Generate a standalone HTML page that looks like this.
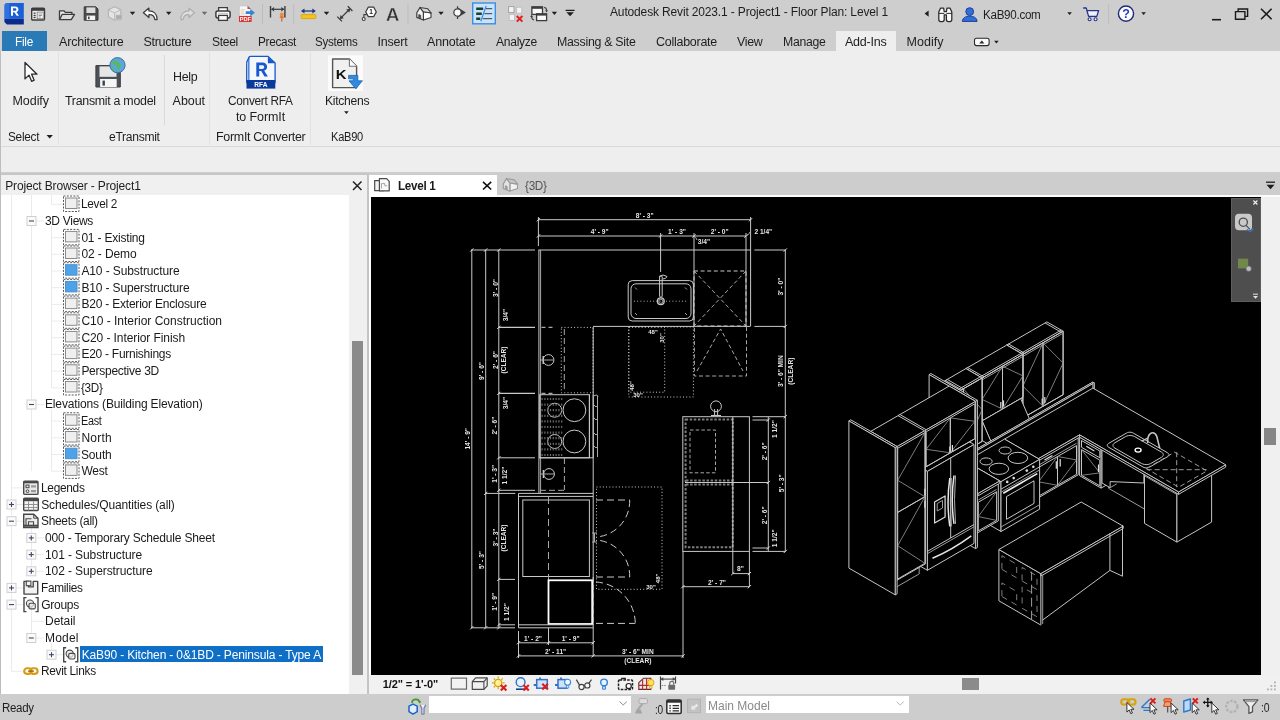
<!DOCTYPE html>
<html><head><meta charset="utf-8"><title>Autodesk Revit 2023.1 - Project1 - Floor Plan: Level 1</title>
<style>
*{box-sizing:border-box;margin:0;padding:0}
html,body{width:1280px;height:720px;overflow:hidden;background:#cecece;font-family:"Liberation Sans",sans-serif}
.a{position:absolute}
.t{position:absolute;white-space:nowrap;font-family:"Liberation Sans",sans-serif}
#titlebar{left:0;top:0;width:1280px;height:31px;background:#cecece}
#tabrow{left:0;top:31px;width:1280px;height:20px;background:#cecece}
#filetab{left:2px;top:31px;width:45px;height:20px;background:#2b7ab8}
#addins{left:836px;top:31px;width:60px;height:21px;background:#eeeeee}
#ribbon{left:1px;top:51px;width:1279px;height:96px;background:#eeeeee;border-bottom:1px solid #dadada}
#optbar{left:1px;top:147px;width:1279px;height:25px;background:#eeeeee}
#band{left:0;top:172.5px;width:1280px;height:2.5px;background:#c6c6c6}
.psep{position:absolute;top:52px;width:1px;height:93px;background:#e2e2e2}
#pbhead{left:1px;top:175px;width:366px;height:20px;background:#f0f0f0}
#pbtree{left:1px;top:195px;width:348px;height:499.3px;background:#ffffff}
#pbscroll{left:349px;top:195px;width:18px;height:499.3px;background:#f0f0f0}
#pbthumb{left:352px;top:341px;width:11px;height:334px;background:#8b8b8b}
#pbgap{left:365px;top:175px;width:6px;height:519px;background:linear-gradient(90deg,#f0f0f0 0,#f0f0f0 2px,#c4c4c4 2px,#c4c4c4 3.8px,#fff 3.8px)}
#sel{left:80px;top:645.6px;width:242.5px;height:16.3px;background:#0f6fc6}
#viewtabs{left:369px;top:173px;width:911px;height:24px;background:#cdcdcd;border-bottom:2.5px solid #fbfbfb}
#tab1{left:369px;top:175px;width:128px;height:22px;background:#ffffff}
#view{left:371px;top:197px;width:890.3px;height:478px;background:#000}
#vscroll{left:1261.3px;top:197px;width:18.7px;height:478px;background:#f0f0f0}
#vthumb{left:1264px;top:428px;width:12px;height:16.7px;background:#868686}
#vcb{left:369px;top:675px;width:911px;height:19.3px;background:#f1f1f1}
#hthumb{left:962px;top:678px;width:17px;height:12px;background:#8b8b8b}
#status{left:0;top:694.3px;width:1280px;height:25.7px;background:#cdcdcd}
#combo1{left:429px;top:696px;width:202px;height:17px;background:#fff}
#combo2{left:706px;top:696px;width:203px;height:17px;background:#fff}
#navbar{left:1231px;top:197.5px;width:30px;height:104.5px;background:#4e4e4e;border:1px solid #5e5e5e}
#leftedge{left:0;top:51px;width:1px;height:643px;background:#bdbdbd}
svg{position:absolute;left:0;top:0;overflow:visible;will-change:transform}
</style></head><body>
<div class="a" id="titlebar"></div>
<div class="a" id="tabrow"></div>
<div class="a" id="filetab"></div>
<div class="a" id="addins"></div>
<div class="a" id="ribbon"></div>
<div class="a" id="optbar"></div>
<div class="a" id="band"></div>
<div class="psep" style="left:58px"></div>
<div class="psep" style="left:209px"></div>
<div class="psep" style="left:310px"></div>
<div class="psep" style="left:164px;top:55px;height:70px;background:#d9d9d9"></div>
<div class="a" id="pbhead"></div>
<div class="a" id="pbtree"></div>
<div class="a" id="pbscroll"></div>
<div class="a" id="pbthumb"></div>
<div class="a" id="pbgap"></div>
<div class="a" id="sel"></div>
<div class="a" id="viewtabs"></div>
<div class="a" id="tab1"></div>
<div class="a" id="view"></div>
<div class="a" id="vscroll"></div>
<div class="a" id="vthumb"></div>
<div class="a" id="vcb"></div>
<div class="a" id="hthumb"></div>
<div class="a" id="status"></div>
<div class="a" id="combo1"></div>
<div class="a" id="combo2"></div>
<div class="a" id="navbar"></div>
<div class="a" id="leftedge"></div>
<svg width="1280" height="720" viewBox="0 0 1280 720" font-family="Liberation Sans, sans-serif">
<line x1="538.4" y1="219.7" x2="750.6" y2="219.7" stroke="#c9c9c9" stroke-width="1"/>
<line x1="538.4" y1="236.0" x2="746.0" y2="236.0" stroke="#c9c9c9" stroke-width="1"/>
<line x1="538.4" y1="217.0" x2="538.4" y2="246.0" stroke="#c9c9c9" stroke-width="1"/>
<line x1="750.6" y1="217.0" x2="750.6" y2="326.0" stroke="#c9c9c9" stroke-width="1"/>
<line x1="660.6" y1="233.0" x2="660.6" y2="272.0" stroke="#c9c9c9" stroke-width="1"/>
<line x1="694.0" y1="233.0" x2="694.0" y2="271.0" stroke="#c9c9c9" stroke-width="1"/>
<line x1="746.0" y1="233.0" x2="746.0" y2="271.0" stroke="#c9c9c9" stroke-width="1"/>
<line x1="536.8" y1="221.3" x2="540.0" y2="218.1" stroke="#dddddd" stroke-width="1"/>
<line x1="749.0" y1="221.3" x2="752.2" y2="218.1" stroke="#dddddd" stroke-width="1"/>
<line x1="536.8" y1="237.6" x2="540.0" y2="234.4" stroke="#dddddd" stroke-width="1"/>
<line x1="659.0" y1="237.6" x2="662.2" y2="234.4" stroke="#dddddd" stroke-width="1"/>
<line x1="692.4" y1="237.6" x2="695.6" y2="234.4" stroke="#dddddd" stroke-width="1"/>
<line x1="744.4" y1="237.6" x2="747.6" y2="234.4" stroke="#dddddd" stroke-width="1"/>
<text x="644.7" y="215.4" font-size="6.6" font-weight="bold" fill="#e6e6e6" text-anchor="middle" dominant-baseline="central">8' - 3"</text>
<text x="599.7" y="231.9" font-size="6.6" font-weight="bold" fill="#e6e6e6" text-anchor="middle" dominant-baseline="central">4' - 9"</text>
<text x="677.0" y="231.9" font-size="6.6" font-weight="bold" fill="#e6e6e6" text-anchor="middle" dominant-baseline="central">1' - 3"</text>
<text x="719.7" y="231.9" font-size="6.6" font-weight="bold" fill="#e6e6e6" text-anchor="middle" dominant-baseline="central">2' - 0"</text>
<text x="763.3" y="231.9" font-size="6.6" font-weight="bold" fill="#e6e6e6" text-anchor="middle" dominant-baseline="central">2 1/4"</text>
<text x="704.0" y="241.0" font-size="6.6" font-weight="bold" fill="#e6e6e6" text-anchor="middle" dominant-baseline="central">3/4"</text>
<path d="M746 236 q3 -1 4 -4" fill="none" stroke="#a8a8a8" stroke-width="1"/>
<path d="M694 236 q2 1 3 4" fill="none" stroke="#a8a8a8" stroke-width="1"/>
<line x1="471.0" y1="250.0" x2="535.0" y2="250.0" stroke="#c9c9c9" stroke-width="1"/>
<line x1="471.8" y1="250.0" x2="471.8" y2="627.8" stroke="#c9c9c9" stroke-width="1"/>
<line x1="485.7" y1="250.0" x2="485.7" y2="627.8" stroke="#c9c9c9" stroke-width="1"/>
<line x1="498.8" y1="250.0" x2="498.8" y2="627.8" stroke="#c9c9c9" stroke-width="1"/>
<line x1="470.2" y1="251.6" x2="473.4" y2="248.4" stroke="#dddddd" stroke-width="1"/>
<line x1="484.1" y1="251.6" x2="487.3" y2="248.4" stroke="#dddddd" stroke-width="1"/>
<line x1="497.2" y1="251.6" x2="500.4" y2="248.4" stroke="#dddddd" stroke-width="1"/>
<line x1="470.2" y1="629.4" x2="473.4" y2="626.1" stroke="#dddddd" stroke-width="1"/>
<line x1="484.1" y1="629.4" x2="487.3" y2="626.1" stroke="#dddddd" stroke-width="1"/>
<line x1="497.2" y1="629.4" x2="500.4" y2="626.1" stroke="#dddddd" stroke-width="1"/>
<line x1="484.1" y1="495.0" x2="487.3" y2="491.8" stroke="#dddddd" stroke-width="1"/>
<line x1="497.2" y1="329.0" x2="500.4" y2="325.8" stroke="#dddddd" stroke-width="1"/>
<line x1="497.2" y1="395.0" x2="500.4" y2="391.8" stroke="#dddddd" stroke-width="1"/>
<line x1="497.2" y1="459.4" x2="500.4" y2="456.2" stroke="#dddddd" stroke-width="1"/>
<line x1="497.2" y1="491.9" x2="500.4" y2="488.7" stroke="#dddddd" stroke-width="1"/>
<line x1="497.2" y1="581.0" x2="500.4" y2="577.8" stroke="#dddddd" stroke-width="1"/>
<line x1="497.2" y1="626.4" x2="500.4" y2="623.1" stroke="#dddddd" stroke-width="1"/>
<line x1="498.8" y1="327.4" x2="535.0" y2="327.4" stroke="#c9c9c9" stroke-width="1.4"/>
<line x1="498.8" y1="393.4" x2="535.0" y2="393.4" stroke="#c9c9c9" stroke-width="1.4"/>
<line x1="498.8" y1="457.8" x2="535.0" y2="457.8" stroke="#c9c9c9" stroke-width="1"/>
<line x1="498.8" y1="490.3" x2="535.0" y2="490.3" stroke="#c9c9c9" stroke-width="1"/>
<line x1="485.3" y1="493.4" x2="515.3" y2="493.4" stroke="#c9c9c9" stroke-width="1"/>
<line x1="498.8" y1="579.4" x2="515.0" y2="579.4" stroke="#c9c9c9" stroke-width="1"/>
<line x1="498.8" y1="624.8" x2="515.0" y2="624.8" stroke="#c9c9c9" stroke-width="1"/>
<line x1="471.0" y1="627.8" x2="515.0" y2="627.8" stroke="#c9c9c9" stroke-width="1"/>
<text x="495.0" y="288.0" font-size="6.6" font-weight="bold" fill="#e6e6e6" text-anchor="middle" dominant-baseline="central" transform="rotate(-90 495.0 288.0)">3' - 0"</text>
<text x="505.0" y="315.0" font-size="6.6" font-weight="bold" fill="#e6e6e6" text-anchor="middle" dominant-baseline="central" transform="rotate(-90 505.0 315.0)">3/4"</text>
<text x="481.5" y="371.0" font-size="6.6" font-weight="bold" fill="#e6e6e6" text-anchor="middle" dominant-baseline="central" transform="rotate(-90 481.5 371.0)">9' - 6"</text>
<text x="495.0" y="360.0" font-size="6.6" font-weight="bold" fill="#e6e6e6" text-anchor="middle" dominant-baseline="central" transform="rotate(-90 495.0 360.0)">2' - 6"</text>
<text x="503.8" y="360.0" font-size="6.6" font-weight="bold" fill="#e6e6e6" text-anchor="middle" dominant-baseline="central" transform="rotate(-90 503.8 360.0)">(CLEAR)</text>
<text x="505.0" y="403.0" font-size="6.6" font-weight="bold" fill="#e6e6e6" text-anchor="middle" dominant-baseline="central" transform="rotate(-90 505.0 403.0)">3/4"</text>
<text x="495.0" y="425.6" font-size="6.6" font-weight="bold" fill="#e6e6e6" text-anchor="middle" dominant-baseline="central" transform="rotate(-90 495.0 425.6)">2' - 6"</text>
<text x="467.5" y="438.8" font-size="6.6" font-weight="bold" fill="#e6e6e6" text-anchor="middle" dominant-baseline="central" transform="rotate(-90 467.5 438.8)">14' - 9"</text>
<text x="495.0" y="473.8" font-size="6.6" font-weight="bold" fill="#e6e6e6" text-anchor="middle" dominant-baseline="central" transform="rotate(-90 495.0 473.8)">1' - 3"</text>
<text x="505.0" y="475.6" font-size="6.6" font-weight="bold" fill="#e6e6e6" text-anchor="middle" dominant-baseline="central" transform="rotate(-90 505.0 475.6)">1 1/2"</text>
<text x="495.0" y="537.5" font-size="6.6" font-weight="bold" fill="#e6e6e6" text-anchor="middle" dominant-baseline="central" transform="rotate(-90 495.0 537.5)">3' - 3"</text>
<text x="503.8" y="538.0" font-size="6.6" font-weight="bold" fill="#e6e6e6" text-anchor="middle" dominant-baseline="central" transform="rotate(-90 503.8 538.0)">(CLEAR)</text>
<text x="481.5" y="560.0" font-size="6.6" font-weight="bold" fill="#e6e6e6" text-anchor="middle" dominant-baseline="central" transform="rotate(-90 481.5 560.0)">5' - 3"</text>
<text x="495.0" y="601.9" font-size="6.6" font-weight="bold" fill="#e6e6e6" text-anchor="middle" dominant-baseline="central" transform="rotate(-90 495.0 601.9)">1' - 9"</text>
<text x="506.5" y="612.0" font-size="6.6" font-weight="bold" fill="#e6e6e6" text-anchor="middle" dominant-baseline="central" transform="rotate(-90 506.5 612.0)">1 1/2"</text>
<line x1="538.4" y1="250.0" x2="750.6" y2="250.0" stroke="#c9c9c9" stroke-width="1"/>
<line x1="538.9" y1="250.0" x2="538.9" y2="493.4" stroke="#c9c9c9" stroke-width="1"/>
<line x1="540.6" y1="250.0" x2="540.6" y2="493.4" stroke="#a8a8a8" stroke-width="1"/>
<line x1="593.0" y1="326.4" x2="750.6" y2="326.4" stroke="#c9c9c9" stroke-width="1"/>
<line x1="541.5" y1="327.4" x2="555.0" y2="327.4" stroke="#a8a8a8" stroke-width="1.4" stroke-dasharray="4 3"/>
<line x1="541.5" y1="393.4" x2="555.0" y2="393.4" stroke="#a8a8a8" stroke-width="1.4" stroke-dasharray="4 3"/>
<rect x="628.2" y="280.6" width="65.2" height="40.4" fill="none" stroke="#c9c9c9" stroke-width="1" rx="4"/>
<rect x="631.0" y="283.8" width="60.0" height="34.7" fill="none" stroke="#c9c9c9" stroke-width="1" rx="5"/>
<line x1="634.0" y1="301.2" x2="688.0" y2="301.2" stroke="#a8a8a8" stroke-width="1" stroke-dasharray="1 2.2"/>
<line x1="635.0" y1="287.5" x2="637.0" y2="289.5" stroke="#a8a8a8" stroke-width="1"/>
<line x1="685.0" y1="287.5" x2="687.0" y2="289.5" stroke="#a8a8a8" stroke-width="1"/>
<line x1="635.0" y1="313.0" x2="637.0" y2="315.0" stroke="#a8a8a8" stroke-width="1"/>
<line x1="685.0" y1="313.0" x2="687.0" y2="315.0" stroke="#a8a8a8" stroke-width="1"/>
<circle cx="660.8" cy="301.3" r="3.4" fill="none" stroke="#c9c9c9" stroke-width="1.3"/>
<circle cx="660.8" cy="301.3" r="2.1" fill="none" stroke="#a8a8a8" stroke-width="1"/>
<rect x="659.6" y="276.0" width="2.6" height="21.0" fill="none" stroke="#c9c9c9" stroke-width="1" rx="1"/>
<path d="M659 276.5 q4 -3 8 0 q-1 2.5 -4 2.5" fill="none" stroke="#c9c9c9" stroke-width="1"/>
<rect x="694.0" y="271.0" width="52.0" height="55.0" fill="none" stroke="#c9c9c9" stroke-width="1" stroke-dasharray="4 2.6"/>
<line x1="694.0" y1="271.0" x2="746.0" y2="326.0" stroke="#a8a8a8" stroke-width="1" stroke-dasharray="4 2.6"/>
<line x1="746.0" y1="271.0" x2="694.0" y2="326.0" stroke="#a8a8a8" stroke-width="1" stroke-dasharray="4 2.6"/>
<line x1="694.0" y1="271.0" x2="694.0" y2="326.0" stroke="#c9c9c9" stroke-width="1"/>
<line x1="746.0" y1="271.0" x2="746.0" y2="326.0" stroke="#c9c9c9" stroke-width="1"/>
<line x1="754.4" y1="250.0" x2="785.3" y2="250.0" stroke="#c9c9c9" stroke-width="1"/>
<line x1="754.4" y1="326.4" x2="785.3" y2="326.4" stroke="#c9c9c9" stroke-width="1"/>
<line x1="785.3" y1="250.0" x2="785.3" y2="416.6" stroke="#c9c9c9" stroke-width="1"/>
<line x1="783.7" y1="251.6" x2="786.9" y2="248.4" stroke="#dddddd" stroke-width="1"/>
<line x1="783.7" y1="328.0" x2="786.9" y2="324.8" stroke="#dddddd" stroke-width="1"/>
<line x1="783.7" y1="418.2" x2="786.9" y2="415.0" stroke="#dddddd" stroke-width="1"/>
<text x="780.6" y="286.6" font-size="6.6" font-weight="bold" fill="#e6e6e6" text-anchor="middle" dominant-baseline="central" transform="rotate(-90 780.6 286.6)">3' - 0"</text>
<text x="780.6" y="371.2" font-size="6.6" font-weight="bold" fill="#e6e6e6" text-anchor="middle" dominant-baseline="central" transform="rotate(-90 780.6 371.2)">3' - 6" MIN</text>
<text x="790.6" y="371.2" font-size="6.6" font-weight="bold" fill="#e6e6e6" text-anchor="middle" dominant-baseline="central" transform="rotate(-90 790.6 371.2)">(CLEAR)</text>
<rect x="561.3" y="327.4" width="31.7" height="65.4" fill="none" stroke="#c9c9c9" stroke-width="1" stroke-dasharray="1 2.2"/>
<line x1="564.3" y1="329.0" x2="564.3" y2="392.0" stroke="#a8a8a8" stroke-width="1" stroke-dasharray="6 3"/>
<rect x="628.8" y="327.0" width="35.9" height="65.2" fill="none" stroke="#c9c9c9" stroke-width="1" stroke-dasharray="1 2.2"/>
<rect x="628.8" y="327.0" width="64.6" height="70.0" fill="none" stroke="#c9c9c9" stroke-width="1" stroke-dasharray="1 2.2"/>
<text x="653.0" y="331.5" font-size="6" font-weight="bold" fill="#e6e6e6" text-anchor="middle" dominant-baseline="central">48"</text>
<text x="661.5" y="338.0" font-size="6" font-weight="bold" fill="#e6e6e6" text-anchor="middle" dominant-baseline="central" transform="rotate(-90 661.5 338.0)">30"</text>
<text x="631.5" y="386.0" font-size="6" font-weight="bold" fill="#e6e6e6" text-anchor="middle" dominant-baseline="central" transform="rotate(-90 631.5 386.0)">48"</text>
<text x="638.0" y="394.7" font-size="6" font-weight="bold" fill="#e6e6e6" text-anchor="middle" dominant-baseline="central">30"</text>
<rect x="694.4" y="326.4" width="52.1" height="49.6" fill="none" stroke="#a8a8a8" stroke-width="1" stroke-dasharray="4 2.6"/>
<path d="M697 371 L720.6 329 L743 371" fill="none" stroke="#a8a8a8" stroke-width="1" stroke-dasharray="4 2.6"/>
<line x1="593.2" y1="327.0" x2="593.2" y2="656.2" stroke="#c9c9c9" stroke-width="1"/>
<circle cx="548.5" cy="360.0" r="5.4" fill="none" stroke="#c9c9c9" stroke-width="1"/>
<line x1="543.2" y1="356.0" x2="543.2" y2="364.0" stroke="#c9c9c9" stroke-width="1.4"/>
<line x1="540.0" y1="360.0" x2="553.0" y2="360.0" stroke="#a8a8a8" stroke-width="1"/>
<rect x="539.7" y="394.7" width="49.7" height="63.1" fill="none" stroke="#c9c9c9" stroke-width="1"/>
<line x1="593.2" y1="394.7" x2="593.2" y2="457.8" stroke="#c9c9c9" stroke-width="1"/>
<line x1="589.4" y1="394.7" x2="589.4" y2="457.8" stroke="#c9c9c9" stroke-width="1"/>
<circle cx="554.7" cy="410.2" r="7.0" fill="none" stroke="#c9c9c9" stroke-width="1"/>
<circle cx="574.4" cy="410.2" r="11.4" fill="none" stroke="#c9c9c9" stroke-width="1"/>
<circle cx="554.7" cy="441.5" r="7.0" fill="none" stroke="#c9c9c9" stroke-width="1"/>
<circle cx="574.4" cy="441.5" r="11.4" fill="none" stroke="#c9c9c9" stroke-width="1"/>
<line x1="541.5" y1="399.0" x2="563.0" y2="399.0" stroke="#6c6c6c" stroke-width="2.2" stroke-dasharray="1.2 1.6"/>
<line x1="541.5" y1="404.6" x2="563.0" y2="404.6" stroke="#6c6c6c" stroke-width="2.2" stroke-dasharray="1.2 1.6"/>
<line x1="541.5" y1="410.2" x2="563.0" y2="410.2" stroke="#6c6c6c" stroke-width="2.2" stroke-dasharray="1.2 1.6"/>
<line x1="541.5" y1="415.8" x2="563.0" y2="415.8" stroke="#6c6c6c" stroke-width="2.2" stroke-dasharray="1.2 1.6"/>
<line x1="541.5" y1="421.4" x2="563.0" y2="421.4" stroke="#6c6c6c" stroke-width="2.2" stroke-dasharray="1.2 1.6"/>
<line x1="541.5" y1="427.0" x2="563.0" y2="427.0" stroke="#6c6c6c" stroke-width="2.2" stroke-dasharray="1.2 1.6"/>
<line x1="541.5" y1="432.6" x2="563.0" y2="432.6" stroke="#6c6c6c" stroke-width="2.2" stroke-dasharray="1.2 1.6"/>
<line x1="541.5" y1="438.2" x2="563.0" y2="438.2" stroke="#6c6c6c" stroke-width="2.2" stroke-dasharray="1.2 1.6"/>
<line x1="541.5" y1="443.8" x2="563.0" y2="443.8" stroke="#6c6c6c" stroke-width="2.2" stroke-dasharray="1.2 1.6"/>
<line x1="541.5" y1="449.4" x2="563.0" y2="449.4" stroke="#6c6c6c" stroke-width="2.2" stroke-dasharray="1.2 1.6"/>
<line x1="541.5" y1="455.0" x2="563.0" y2="455.0" stroke="#6c6c6c" stroke-width="2.2" stroke-dasharray="1.2 1.6"/>
<path d="M594 405.0 l2 2 l2 -2" fill="none" stroke="#a8a8a8" stroke-width="1"/>
<path d="M594 418.0 l2 2 l2 -2" fill="none" stroke="#a8a8a8" stroke-width="1"/>
<path d="M594 433.0 l2 2 l2 -2" fill="none" stroke="#a8a8a8" stroke-width="1"/>
<path d="M594 446.0 l2 2 l2 -2" fill="none" stroke="#a8a8a8" stroke-width="1"/>
<line x1="597.5" y1="396.0" x2="597.5" y2="457.0" stroke="#a8a8a8" stroke-width="1"/>
<path d="M593 396 l4 -1 l1 2" fill="none" stroke="#a8a8a8" stroke-width="1"/>
<line x1="539.0" y1="457.8" x2="593.2" y2="457.8" stroke="#c9c9c9" stroke-width="1"/>
<line x1="518.5" y1="493.4" x2="593.2" y2="493.4" stroke="#c9c9c9" stroke-width="1"/>
<line x1="518.5" y1="496.4" x2="593.2" y2="496.4" stroke="#c9c9c9" stroke-width="1"/>
<circle cx="549.0" cy="474.0" r="5.4" fill="none" stroke="#c9c9c9" stroke-width="1"/>
<line x1="543.4" y1="470.0" x2="543.4" y2="478.0" stroke="#c9c9c9" stroke-width="1.4"/>
<line x1="540.0" y1="474.0" x2="554.0" y2="474.0" stroke="#a8a8a8" stroke-width="1"/>
<line x1="564.4" y1="458.0" x2="564.4" y2="490.0" stroke="#a8a8a8" stroke-width="1" stroke-dasharray="6 3"/>
<line x1="540.0" y1="490.3" x2="564.0" y2="490.3" stroke="#a8a8a8" stroke-width="1" stroke-dasharray="6 3"/>
<line x1="518.5" y1="493.4" x2="518.5" y2="627.8" stroke="#c9c9c9" stroke-width="1"/>
<rect x="522.8" y="500.0" width="66.6" height="76.5" fill="none" stroke="#c9c9c9" stroke-width="1"/>
<line x1="548.5" y1="497.0" x2="548.5" y2="580.0" stroke="#a8a8a8" stroke-width="1" stroke-dasharray="7 4"/>
<rect x="548.5" y="580.3" width="43.7" height="43.7" fill="none" stroke="#ffffff" stroke-width="1.8"/>
<line x1="518.5" y1="624.8" x2="593.5" y2="624.8" stroke="#c9c9c9" stroke-width="1"/>
<line x1="518.5" y1="627.8" x2="593.5" y2="627.8" stroke="#c9c9c9" stroke-width="1"/>
<line x1="596.0" y1="500.0" x2="629.7" y2="500.0" stroke="#c9c9c9" stroke-width="1" stroke-dasharray="7 4"/>
<path d="M629.7 500 A36 36 0 0 1 596 537" fill="none" stroke="#c9c9c9" stroke-width="1" stroke-dasharray="7 4"/>
<line x1="596.0" y1="577.0" x2="629.7" y2="577.0" stroke="#c9c9c9" stroke-width="1" stroke-dasharray="7 4"/>
<path d="M629.7 577 A36 36 0 0 0 596 540" fill="none" stroke="#c9c9c9" stroke-width="1" stroke-dasharray="7 4"/>
<path d="M596 582 A42 42 0 0 1 635.3 623.4" fill="none" stroke="#c9c9c9" stroke-width="1" stroke-dasharray="7 4"/>
<line x1="596.0" y1="623.4" x2="635.3" y2="623.4" stroke="#c9c9c9" stroke-width="1" stroke-dasharray="7 4"/>
<line x1="593.2" y1="577.0" x2="593.2" y2="624.0" stroke="#c9c9c9" stroke-width="1" stroke-dasharray="5 3"/>
<path d="M592 533 h5 M594.5 533 v9 M592 542 h5" fill="none" stroke="#a8a8a8" stroke-width="1"/>
<rect x="596.5" y="487.0" width="65.5" height="102.3" fill="none" stroke="#c9c9c9" stroke-width="1" stroke-dasharray="1 2.2"/>
<text x="657.8" y="578.4" font-size="6" font-weight="bold" fill="#e6e6e6" text-anchor="middle" dominant-baseline="central" transform="rotate(-90 657.8 578.4)">48"</text>
<text x="651.0" y="586.9" font-size="6" font-weight="bold" fill="#e6e6e6" text-anchor="middle" dominant-baseline="central">30"</text>
<line x1="518.5" y1="642.8" x2="593.5" y2="642.8" stroke="#c9c9c9" stroke-width="1"/>
<line x1="518.5" y1="655.9" x2="683.0" y2="655.9" stroke="#c9c9c9" stroke-width="1"/>
<line x1="518.5" y1="631.0" x2="518.5" y2="658.0" stroke="#c9c9c9" stroke-width="1"/>
<line x1="548.5" y1="627.8" x2="548.5" y2="645.0" stroke="#c9c9c9" stroke-width="1"/>
<line x1="683.0" y1="551.4" x2="683.0" y2="658.0" stroke="#c9c9c9" stroke-width="1"/>
<line x1="516.9" y1="644.4" x2="520.1" y2="641.1" stroke="#dddddd" stroke-width="1"/>
<line x1="546.9" y1="644.4" x2="550.1" y2="641.1" stroke="#dddddd" stroke-width="1"/>
<line x1="591.6" y1="644.4" x2="594.8" y2="641.1" stroke="#dddddd" stroke-width="1"/>
<line x1="516.9" y1="657.5" x2="520.1" y2="654.3" stroke="#dddddd" stroke-width="1"/>
<line x1="591.6" y1="657.5" x2="594.8" y2="654.3" stroke="#dddddd" stroke-width="1"/>
<line x1="681.4" y1="657.5" x2="684.6" y2="654.3" stroke="#dddddd" stroke-width="1"/>
<text x="533.0" y="638.8" font-size="6.6" font-weight="bold" fill="#e6e6e6" text-anchor="middle" dominant-baseline="central">1' - 2"</text>
<text x="570.6" y="638.8" font-size="6.6" font-weight="bold" fill="#e6e6e6" text-anchor="middle" dominant-baseline="central">1' - 9"</text>
<text x="555.6" y="651.5" font-size="6.6" font-weight="bold" fill="#e6e6e6" text-anchor="middle" dominant-baseline="central">2' - 11"</text>
<text x="637.8" y="651.5" font-size="6.6" font-weight="bold" fill="#e6e6e6" text-anchor="middle" dominant-baseline="central">3' - 6" MIN</text>
<text x="637.8" y="660.4" font-size="6.6" font-weight="bold" fill="#e6e6e6" text-anchor="middle" dominant-baseline="central">(CLEAR)</text>
<rect x="682.8" y="416.7" width="66.6" height="134.7" fill="none" stroke="#c9c9c9" stroke-width="1"/>
<rect x="685.6" y="419.5" width="47.2" height="127.7" fill="none" stroke="#7c7c7c" stroke-width="2" stroke-dasharray="2.5 1.6"/>
<line x1="686.0" y1="480.6" x2="732.8" y2="480.6" stroke="#7c7c7c" stroke-width="2" stroke-dasharray="2.5 1.6"/>
<line x1="686.0" y1="484.6" x2="732.8" y2="484.6" stroke="#7c7c7c" stroke-width="2" stroke-dasharray="2.5 1.6"/>
<line x1="685.0" y1="482.5" x2="768.3" y2="482.5" stroke="#c9c9c9" stroke-width="1"/>
<rect x="690.0" y="430.0" width="25.5" height="42.8" fill="none" stroke="#a8a8a8" stroke-width="1" stroke-dasharray="3.5 2.2"/>
<line x1="732.8" y1="416.7" x2="732.8" y2="573.6" stroke="#c9c9c9" stroke-width="1"/>
<circle cx="716.0" cy="406.3" r="5.4" fill="none" stroke="#c9c9c9" stroke-width="1"/>
<line x1="714.6" y1="409.0" x2="714.6" y2="416.0" stroke="#c9c9c9" stroke-width="1"/>
<line x1="717.6" y1="409.0" x2="717.6" y2="416.0" stroke="#c9c9c9" stroke-width="1"/>
<line x1="711.0" y1="415.6" x2="721.0" y2="415.6" stroke="#c9c9c9" stroke-width="1.3"/>
<line x1="768.3" y1="416.7" x2="768.3" y2="551.4" stroke="#c9c9c9" stroke-width="1"/>
<line x1="785.3" y1="416.6" x2="785.3" y2="551.4" stroke="#c9c9c9" stroke-width="1"/>
<line x1="752.5" y1="416.7" x2="785.3" y2="416.7" stroke="#c9c9c9" stroke-width="1"/>
<line x1="752.5" y1="420.0" x2="768.3" y2="420.0" stroke="#c9c9c9" stroke-width="1"/>
<line x1="752.5" y1="551.4" x2="785.3" y2="551.4" stroke="#c9c9c9" stroke-width="1"/>
<line x1="752.5" y1="548.0" x2="768.3" y2="548.0" stroke="#c9c9c9" stroke-width="1"/>
<line x1="766.7" y1="421.6" x2="769.9" y2="418.4" stroke="#dddddd" stroke-width="1"/>
<line x1="766.7" y1="484.1" x2="769.9" y2="480.9" stroke="#dddddd" stroke-width="1"/>
<line x1="766.7" y1="549.6" x2="769.9" y2="546.4" stroke="#dddddd" stroke-width="1"/>
<line x1="783.7" y1="553.0" x2="786.9" y2="549.8" stroke="#dddddd" stroke-width="1"/>
<text x="765.0" y="451.4" font-size="6.6" font-weight="bold" fill="#e6e6e6" text-anchor="middle" dominant-baseline="central" transform="rotate(-90 765.0 451.4)">2' - 6"</text>
<text x="774.6" y="429.0" font-size="6.6" font-weight="bold" fill="#e6e6e6" text-anchor="middle" dominant-baseline="central" transform="rotate(-90 774.6 429.0)">1 1/2"</text>
<text x="781.4" y="483.3" font-size="6.6" font-weight="bold" fill="#e6e6e6" text-anchor="middle" dominant-baseline="central" transform="rotate(-90 781.4 483.3)">5' - 3"</text>
<text x="765.0" y="515.3" font-size="6.6" font-weight="bold" fill="#e6e6e6" text-anchor="middle" dominant-baseline="central" transform="rotate(-90 765.0 515.3)">2' - 6"</text>
<text x="774.6" y="538.3" font-size="6.6" font-weight="bold" fill="#e6e6e6" text-anchor="middle" dominant-baseline="central" transform="rotate(-90 774.6 538.3)">1 1/2"</text>
<line x1="749.4" y1="551.4" x2="749.4" y2="586.7" stroke="#c9c9c9" stroke-width="1"/>
<line x1="732.8" y1="573.6" x2="749.4" y2="573.6" stroke="#c9c9c9" stroke-width="1"/>
<line x1="682.8" y1="586.7" x2="749.4" y2="586.7" stroke="#c9c9c9" stroke-width="1"/>
<line x1="731.2" y1="575.2" x2="734.4" y2="572.0" stroke="#dddddd" stroke-width="1"/>
<line x1="747.8" y1="575.2" x2="751.0" y2="572.0" stroke="#dddddd" stroke-width="1"/>
<line x1="681.2" y1="588.3" x2="684.4" y2="585.1" stroke="#dddddd" stroke-width="1"/>
<line x1="747.8" y1="588.3" x2="751.0" y2="585.1" stroke="#dddddd" stroke-width="1"/>
<text x="740.5" y="568.6" font-size="6.6" font-weight="bold" fill="#e6e6e6" text-anchor="middle" dominant-baseline="central">8"</text>
<text x="717.0" y="582.5" font-size="6.6" font-weight="bold" fill="#e6e6e6" text-anchor="middle" dominant-baseline="central">2' - 7"</text>
</svg>
<svg width="1280" height="720" viewBox="0 0 1280 720">
<polygon points="1006.7,345.1 1046.9,321.9 1063.1,331.2 1022.9,354.4" fill="#000" stroke="#c4c4c4" stroke-width="1" stroke-linejoin="round"/>
<polygon points="1006.7,408.5 1022.9,417.9 1022.9,354.4 1006.7,345.1" fill="#000" stroke="#c4c4c4" stroke-width="1" stroke-linejoin="round"/>
<polygon points="1022.9,417.9 1063.1,394.7 1063.1,331.2 1022.9,354.4" fill="#000" stroke="#c4c4c4" stroke-width="1" stroke-linejoin="round"/>
<polygon points="1022.9,417.9 1043.0,406.3 1043.0,342.9 1022.9,354.4" fill="none" stroke="#c4c4c4" stroke-width="1" stroke-linejoin="round"/>
<polyline points="1043.0,342.9 1022.9,386.1 1043.0,406.3" fill="none" stroke="#9c9c9c" stroke-width="0.8" stroke-linejoin="round"/>
<polygon points="1043.0,406.3 1063.1,394.7 1063.1,331.2 1043.0,342.9" fill="none" stroke="#c4c4c4" stroke-width="1" stroke-linejoin="round"/>
<polyline points="1043.0,342.9 1063.1,363.0 1043.0,406.3" fill="none" stroke="#9c9c9c" stroke-width="0.8" stroke-linejoin="round"/>
<line x1="1022.9" y1="356.4" x2="1063.1" y2="333.2" stroke="#9c9c9c" stroke-width="1"/>
<line x1="1021.1" y1="353.3" x2="1061.2" y2="330.1" stroke="#c4c4c4" stroke-width="1"/>
<polygon points="1006.7,345.1 1008.6,344.0 1024.8,353.4 1022.9,354.4" fill="none" stroke="#c4c4c4" stroke-width="1" stroke-linejoin="round"/>
<line x1="1045.1" y1="322.9" x2="1061.3" y2="332.3" stroke="#c4c4c4" stroke-width="1"/>
<polygon points="965.9,368.6 1006.7,345.1 1022.9,354.4 982.1,378.0" fill="#000" stroke="#c4c4c4" stroke-width="1" stroke-linejoin="round"/>
<polygon points="965.9,411.5 982.1,420.9 982.1,378.0 965.9,368.6" fill="#000" stroke="#c4c4c4" stroke-width="1" stroke-linejoin="round"/>
<polygon points="982.1,420.9 1022.9,397.3 1022.9,354.4 982.1,378.0" fill="#000" stroke="#c4c4c4" stroke-width="1" stroke-linejoin="round"/>
<polygon points="982.1,420.9 1002.5,409.1 1002.5,366.2 982.1,378.0" fill="none" stroke="#c4c4c4" stroke-width="1" stroke-linejoin="round"/>
<polyline points="1002.5,366.2 982.1,399.4 1002.5,409.1" fill="none" stroke="#9c9c9c" stroke-width="0.8" stroke-linejoin="round"/>
<polygon points="1002.5,409.1 1022.9,397.3 1022.9,354.4 1002.5,366.2" fill="none" stroke="#c4c4c4" stroke-width="1" stroke-linejoin="round"/>
<polyline points="1002.5,366.2 1022.9,375.9 1002.5,409.1" fill="none" stroke="#9c9c9c" stroke-width="0.8" stroke-linejoin="round"/>
<line x1="982.1" y1="379.9" x2="1022.9" y2="356.4" stroke="#9c9c9c" stroke-width="1"/>
<line x1="980.2" y1="376.9" x2="1021.1" y2="353.3" stroke="#c4c4c4" stroke-width="1"/>
<polygon points="965.9,368.6 967.7,367.6 983.9,376.9 982.1,378.0" fill="none" stroke="#c4c4c4" stroke-width="1" stroke-linejoin="round"/>
<polygon points="982.1,420.9 1020.7,398.6 1030.2,420.7 991.6,443.0" fill="#000" stroke="#c4c4c4" stroke-width="1" stroke-linejoin="round"/>
<polygon points="991.6,443.0 1030.2,420.7 1030.2,423.7 991.6,446.0" fill="#000" stroke="#c4c4c4" stroke-width="1" stroke-linejoin="round"/>
<polygon points="965.9,411.5 982.1,420.9 991.6,443.0 991.6,446.0 965.9,431.2" fill="#000" stroke="#c4c4c4" stroke-width="1" stroke-linejoin="round"/>
<line x1="1000.8" y1="408.0" x2="1000.8" y2="401.9" stroke="#e0e0e0" stroke-width="1.2"/>
<line x1="1003.5" y1="406.5" x2="1003.5" y2="400.4" stroke="#e0e0e0" stroke-width="1.2"/>
<line x1="1042.2" y1="404.5" x2="1042.2" y2="398.5" stroke="#e0e0e0" stroke-width="1.2"/>
<line x1="1044.8" y1="403.0" x2="1044.8" y2="397.0" stroke="#e0e0e0" stroke-width="1.2"/>
<polygon points="944.2,381.2 965.9,368.6 982.1,378.0 960.4,390.5" fill="#000" stroke="#c4c4c4" stroke-width="1" stroke-linejoin="round"/>
<polygon points="944.2,444.6 960.4,454.0 960.4,390.5 944.2,381.2" fill="#000" stroke="#c4c4c4" stroke-width="1" stroke-linejoin="round"/>
<polygon points="960.4,454.0 982.1,441.4 982.1,378.0 960.4,390.5" fill="#000" stroke="#c4c4c4" stroke-width="1" stroke-linejoin="round"/>
<polygon points="963.4,452.2 982.1,441.4 982.1,378.0 963.4,388.8" fill="none" stroke="#c4c4c4" stroke-width="1" stroke-linejoin="round"/>
<polyline points="963.4,388.8 982.1,409.7 963.4,452.2" fill="none" stroke="#9c9c9c" stroke-width="0.8" stroke-linejoin="round"/>
<line x1="958.5" y1="389.4" x2="980.2" y2="376.9" stroke="#c4c4c4" stroke-width="1"/>
<polygon points="945.4,380.5 947.2,379.4 963.4,388.8 961.6,389.8" fill="none" stroke="#c4c4c4" stroke-width="1" stroke-linejoin="round"/>
<line x1="963.4" y1="452.2" x2="963.4" y2="388.8" stroke="#c4c4c4" stroke-width="1"/>
<polygon points="944.2,473.9 1092.9,388.1 1092.9,382.1 944.2,467.9" fill="#000" stroke="#c4c4c4" stroke-width="1" stroke-linejoin="round"/>
<polygon points="944.2,467.9 1092.9,382.1 1094.2,382.9 945.5,468.7" fill="#000" stroke="#c4c4c4" stroke-width="1" stroke-linejoin="round"/>
<polygon points="945.5,474.7 1094.2,388.9 1094.2,382.9 945.5,468.7" fill="#000" stroke="#c4c4c4" stroke-width="1" stroke-linejoin="round"/>
<polygon points="1092.9,388.1 1094.2,388.9 1094.2,382.9 1092.9,382.1" fill="#000" stroke="#c4c4c4" stroke-width="1" stroke-linejoin="round"/>
<polygon points="1036.9,498.6 1078.2,474.8 1078.2,436.3 1036.9,460.1" fill="#000" stroke="#c4c4c4" stroke-width="1" stroke-linejoin="round"/>
<polygon points="1038.5,496.2 1057.5,485.3 1057.5,456.5 1038.5,467.5" fill="none" stroke="#c4c4c4" stroke-width="1" stroke-linejoin="round"/>
<polyline points="1057.5,456.5 1038.5,481.8 1057.5,485.3" fill="none" stroke="#9c9c9c" stroke-width="0.8" stroke-linejoin="round"/>
<polygon points="1057.5,485.3 1076.5,474.3 1076.5,445.6 1057.5,456.5" fill="none" stroke="#c4c4c4" stroke-width="1" stroke-linejoin="round"/>
<polyline points="1057.5,456.5 1076.5,459.9 1057.5,485.3" fill="none" stroke="#9c9c9c" stroke-width="0.8" stroke-linejoin="round"/>
<line x1="1038.5" y1="465.2" x2="1076.5" y2="443.3" stroke="#9c9c9c" stroke-width="1"/>
<line x1="1056.3" y1="468.7" x2="1056.3" y2="461.2" stroke="#e0e0e0" stroke-width="1.2"/>
<line x1="1060.2" y1="466.5" x2="1060.2" y2="458.9" stroke="#e0e0e0" stroke-width="1.2"/>
<line x1="1044.5" y1="460.0" x2="1052.4" y2="455.4" stroke="#e0e0e0" stroke-width="1.2"/>
<polygon points="1079.6,475.7 1101.1,488.1 1101.1,449.5 1079.6,437.2" fill="#000" stroke="#c4c4c4" stroke-width="1" stroke-linejoin="round"/>
<polygon points="1081.5,475.3 1099.8,485.8 1099.8,460.1 1081.5,449.6" fill="none" stroke="#c4c4c4" stroke-width="1" stroke-linejoin="round"/>
<polyline points="1081.5,449.6 1099.8,472.9 1081.5,475.3" fill="none" stroke="#9c9c9c" stroke-width="0.8" stroke-linejoin="round"/>
<polygon points="1081.5,447.3 1099.8,457.8 1099.8,451.0 1081.5,440.5" fill="none" stroke="#c4c4c4" stroke-width="1" stroke-linejoin="round"/>
<line x1="1086.3" y1="446.3" x2="1094.4" y2="450.9" stroke="#e0e0e0" stroke-width="1.2"/>
<line x1="1098.5" y1="472.1" x2="1098.5" y2="464.5" stroke="#e0e0e0" stroke-width="1.2"/>
<polygon points="1108.6,488.3 1150.4,512.4 1150.4,469.4 1108.6,445.2" fill="#000" stroke="#9c9c9c" stroke-width="1" stroke-linejoin="round"/>
<polygon points="1101.1,488.1 1108.6,483.8 1108.6,445.2 1101.1,449.5" fill="#000" stroke="#c4c4c4" stroke-width="1" stroke-linejoin="round"/>
<polygon points="1102.0,483.0 1110.1,487.7 1110.1,481.6 1143.9,483.0 1143.9,473.2 1102.0,449.0" fill="#000" stroke="#c4c4c4" stroke-width="1" stroke-linejoin="round"/>
<line x1="1110.1" y1="487.7" x2="1116.7" y2="483.9" stroke="#9c9c9c" stroke-width="1"/>
<polygon points="1144.5,523.4 1176.9,542.1 1176.9,489.9 1144.5,471.2" fill="#000" stroke="#c4c4c4" stroke-width="1" stroke-linejoin="round"/>
<polygon points="1176.9,542.1 1211.6,522.1 1211.6,469.9 1176.9,489.9" fill="#000" stroke="#c4c4c4" stroke-width="1" stroke-linejoin="round"/>
<line x1="1144.5" y1="475.8" x2="1176.9" y2="494.5" stroke="#9c9c9c" stroke-width="1"/>
<polygon points="1004.5,439.1 1092.9,388.1 1225.7,464.8 1178.6,492.0 1079.6,434.9 1038.4,458.7" fill="#000" stroke="#c4c4c4" stroke-width="1" stroke-linejoin="round"/>
<polygon points="1038.4,460.9 1079.6,437.2 1079.6,434.9 1038.4,458.7" fill="#000" stroke="#c4c4c4" stroke-width="1" stroke-linejoin="round"/>
<polygon points="1079.6,437.2 1178.6,494.3 1178.6,492.0 1079.6,434.9" fill="#000" stroke="#c4c4c4" stroke-width="1" stroke-linejoin="round"/>
<polygon points="1178.6,494.3 1225.7,467.1 1225.7,464.8 1178.6,492.0" fill="#000" stroke="#c4c4c4" stroke-width="1" stroke-linejoin="round"/>
<polygon points="1167.6,452.8 1168.3,453.4 1168.8,454.1 1169.0,454.8 1168.9,455.5 1168.4,456.1 1167.7,456.7 1149.6,467.1 1148.7,467.5 1147.5,467.8 1146.3,467.9 1145.1,467.8 1144.0,467.5 1143.0,467.0 1108.7,447.3 1107.9,446.7 1107.4,446.0 1107.3,445.3 1107.4,444.6 1107.8,444.0 1108.6,443.4 1126.6,433.0 1127.6,432.6 1128.7,432.3 1129.9,432.2 1131.2,432.3 1132.3,432.6 1133.3,433.1" fill="#000" stroke="#c4c4c4" stroke-width="1" stroke-linejoin="round"/>
<polygon points="1161.3,452.0 1162.4,452.7 1163.1,453.7 1163.3,454.7 1163.1,455.6 1162.5,456.5 1161.5,457.3 1150.7,463.5 1149.4,464.1 1147.8,464.5 1146.1,464.6 1144.4,464.4 1142.8,464.0 1141.4,463.4 1115.0,448.2 1113.9,447.4 1113.2,446.4 1113.0,445.5 1113.1,444.5 1113.8,443.6 1114.8,442.8 1125.5,436.6 1126.9,436.0 1128.5,435.6 1130.2,435.5 1131.9,435.7 1133.5,436.1 1134.8,436.7" fill="#000" stroke="#c4c4c4" stroke-width="1" stroke-linejoin="round"/>
<ellipse cx="1138.1" cy="450.1" rx="3" ry="2" fill="none" stroke="#ffffff" stroke-width="1.4"/>
<path d="M1147.7 443.1 v-4 c1 -6 6 -9 9 -3 l3 12" fill="none" stroke="#c4c4c4" stroke-width="1.6"/>
<path d="M1147.7 438.1 l-6 3" fill="none" stroke="#c4c4c4" stroke-width="1.2"/>
<path d="M1146.7 469.7 h60 M1176.7 452.2 v35" stroke="#9c9c9c" stroke-width="1" stroke-dasharray="5 3" fill="none"/>
<polygon points="1146.3,468.5 1174.6,452.2 1207.0,470.9 1178.7,487.2" fill="none" stroke="#9c9c9c" stroke-width="1" stroke-linejoin="round" stroke-dasharray="5 3"/>
<polygon points="965.9,461.4 1004.5,439.1 1039.6,459.4 1001.0,481.7" fill="#000" stroke="#c4c4c4" stroke-width="1" stroke-linejoin="round"/>
<polygon points="965.9,511.3 1001.0,531.5 1001.0,481.7 965.9,461.4" fill="#000" stroke="#c4c4c4" stroke-width="1" stroke-linejoin="round"/>
<polygon points="1001.0,531.5 1039.6,509.2 1039.6,459.4 1001.0,481.7" fill="#000" stroke="#c4c4c4" stroke-width="1" stroke-linejoin="round"/>
<ellipse cx="986.1" cy="461.4" rx="6.1" ry="3.5" fill="none" stroke="#c4c4c4" stroke-width="1"/>
<ellipse cx="998.9" cy="468.8" rx="9.8" ry="5.6" fill="none" stroke="#c4c4c4" stroke-width="1"/>
<ellipse cx="1005.1" cy="450.5" rx="6.1" ry="3.5" fill="none" stroke="#c4c4c4" stroke-width="1"/>
<ellipse cx="1017.9" cy="457.9" rx="9.8" ry="5.6" fill="none" stroke="#c4c4c4" stroke-width="1"/>
<line x1="1001.0" y1="489.2" x2="1039.6" y2="466.9" stroke="#c4c4c4" stroke-width="1"/>
<line x1="1001.0" y1="492.2" x2="1039.6" y2="470.0" stroke="#9c9c9c" stroke-width="1"/>
<circle cx="1007.2" cy="481.9" r="1.3" fill="#ddd"/>
<circle cx="1013.7" cy="478.1" r="1.3" fill="#ddd"/>
<circle cx="1026.8" cy="470.6" r="1.3" fill="#ddd"/>
<circle cx="1033.3" cy="466.8" r="1.3" fill="#ddd"/>
<polyline points="1003.2,493.2 1037.3,473.6 1037.3,473.6" fill="none" stroke="#eeeeee" stroke-width="1.6" stroke-linejoin="round"/>
<polygon points="1006.5,519.3 1034.0,503.4 1034.0,480.8 1006.5,496.6" fill="none" stroke="#c4c4c4" stroke-width="1" stroke-linejoin="round"/>
<line x1="1001.0" y1="527.0" x2="1039.6" y2="504.7" stroke="#9c9c9c" stroke-width="1"/>
<polygon points="976.6,533.4 998.3,520.9 998.3,482.4 976.6,494.9" fill="#000" stroke="#c4c4c4" stroke-width="1" stroke-linejoin="round"/>
<polygon points="944.2,473.9 965.9,461.4 999.8,481.0 978.1,493.5" fill="#000" stroke="#c4c4c4" stroke-width="1" stroke-linejoin="round"/>
<polygon points="978.1,495.8 999.8,483.2 999.8,481.0 978.1,493.5" fill="#000" stroke="#c4c4c4" stroke-width="1" stroke-linejoin="round"/>
<polygon points="978.3,530.9 996.6,520.4 996.6,491.7 978.3,502.2" fill="none" stroke="#c4c4c4" stroke-width="1" stroke-linejoin="round"/>
<polyline points="996.6,491.7 978.3,516.6 996.6,520.4" fill="none" stroke="#9c9c9c" stroke-width="0.8" stroke-linejoin="round"/>
<line x1="978.3" y1="500.0" x2="996.6" y2="489.4" stroke="#9c9c9c" stroke-width="1"/>
<polygon points="929.1,374.6 930.9,373.5 977.4,400.3 975.6,401.4" fill="#000" stroke="#c4c4c4" stroke-width="1" stroke-linejoin="round"/>
<polygon points="929.1,521.8 975.6,548.6 975.6,401.4 929.1,374.6" fill="#000" stroke="#c4c4c4" stroke-width="1" stroke-linejoin="round"/>
<polygon points="975.6,548.6 977.4,547.5 977.4,400.3 975.6,401.4" fill="#000" stroke="#c4c4c4" stroke-width="1" stroke-linejoin="round"/>
<polygon points="882.7,445.6 929.3,418.7 974.0,444.5 927.4,471.4" fill="#000" stroke="#c4c4c4" stroke-width="1" stroke-linejoin="round"/>
<polygon points="882.7,544.5 927.4,570.3 927.4,471.4 882.7,445.6" fill="#000" stroke="#c4c4c4" stroke-width="1" stroke-linejoin="round"/>
<polygon points="927.4,570.3 974.0,543.4 974.0,444.5 927.4,471.4" fill="#000" stroke="#c4c4c4" stroke-width="1" stroke-linejoin="round"/>
<line x1="950.7" y1="538.0" x2="950.7" y2="457.9" stroke="#c4c4c4" stroke-width="1"/>
<line x1="927.4" y1="551.4" x2="974.0" y2="524.5" stroke="#c4c4c4" stroke-width="1"/>
<line x1="927.4" y1="553.7" x2="974.0" y2="526.8" stroke="#9c9c9c" stroke-width="1"/>
<path d="M949.8 478.0 q-3.5 24.2 0 48.4" fill="none" stroke="#e6e6e6" stroke-width="1.5"/>
<path d="M951.3 478.0 q-2 24.2 0 48.4" fill="none" stroke="#b0b0b0" stroke-width="1"/>
<path d="M954.0 475.5 q-3.5 24.2 0 48.4" fill="none" stroke="#e6e6e6" stroke-width="1.5"/>
<path d="M955.5 475.5 q-2 24.2 0 48.4" fill="none" stroke="#b0b0b0" stroke-width="1"/>
<path d="M932.5 558.2 Q951.9 550.0 971.3 535.8" fill="none" stroke="#e6e6e6" stroke-width="1.5"/>
<polygon points="934.6,523.1 945.1,517.1 945.1,495.9 934.6,502.0" fill="none" stroke="#dddddd" stroke-width="1.2" stroke-linejoin="round"/>
<polygon points="937.2,511.0 942.5,508.0 942.5,500.4 937.2,503.5" fill="none" stroke="#9c9c9c" stroke-width="1" stroke-linejoin="round"/>
<polygon points="899.0,415.1 949.1,386.1 975.6,401.4 925.4,430.3" fill="#000" stroke="#c4c4c4" stroke-width="1" stroke-linejoin="round"/>
<polygon points="899.0,451.9 925.4,467.2 925.4,430.3 899.0,415.1" fill="#000" stroke="#c4c4c4" stroke-width="1" stroke-linejoin="round"/>
<polygon points="925.4,467.2 975.6,438.3 975.6,401.4 925.4,430.3" fill="#000" stroke="#c4c4c4" stroke-width="1" stroke-linejoin="round"/>
<polygon points="926.2,466.7 950.3,452.8 950.3,417.9 926.2,431.8" fill="none" stroke="#c4c4c4" stroke-width="1" stroke-linejoin="round"/>
<polyline points="950.3,417.9 926.2,449.3 950.3,452.8" fill="none" stroke="#9c9c9c" stroke-width="0.8" stroke-linejoin="round"/>
<polygon points="950.3,452.8 974.8,438.7 974.8,403.8 950.3,417.9" fill="none" stroke="#c4c4c4" stroke-width="1" stroke-linejoin="round"/>
<polyline points="950.3,417.9 974.8,421.3 950.3,452.8" fill="none" stroke="#9c9c9c" stroke-width="0.8" stroke-linejoin="round"/>
<line x1="949.8" y1="452.5" x2="949.8" y2="446.5" stroke="#e0e0e0" stroke-width="1.2"/>
<line x1="952.4" y1="451.0" x2="952.4" y2="445.0" stroke="#e0e0e0" stroke-width="1.2"/>
<polygon points="890.9,590.2 919.2,573.9 919.2,560.3 890.9,576.6" fill="#000" stroke="#9c9c9c" stroke-width="1" stroke-linejoin="round"/>
<polygon points="870.7,431.4 899.0,415.1 925.4,430.3 897.1,446.6" fill="#000" stroke="#c4c4c4" stroke-width="1" stroke-linejoin="round"/>
<polygon points="870.7,564.9 897.1,580.2 897.1,446.6 870.7,431.4" fill="#000" stroke="#c4c4c4" stroke-width="1" stroke-linejoin="round"/>
<polygon points="897.1,580.2 925.4,563.9 925.4,430.3 897.1,446.6" fill="#000" stroke="#c4c4c4" stroke-width="1" stroke-linejoin="round"/>
<polygon points="897.7,512.4 924.9,496.7 924.9,432.6 897.7,448.3" fill="none" stroke="#c4c4c4" stroke-width="1" stroke-linejoin="round"/>
<polyline points="924.9,432.6 897.7,480.3 924.9,496.7" fill="none" stroke="#9c9c9c" stroke-width="0.8" stroke-linejoin="round"/>
<polygon points="897.7,579.0 924.9,563.3 924.9,496.7 897.7,512.4" fill="none" stroke="#c4c4c4" stroke-width="1" stroke-linejoin="round"/>
<polyline points="924.9,496.7 897.7,545.7 924.9,563.3" fill="none" stroke="#9c9c9c" stroke-width="0.8" stroke-linejoin="round"/>
<line x1="924.9" y1="495.6" x2="924.9" y2="488.8" stroke="#e0e0e0" stroke-width="1.2"/>
<line x1="924.9" y1="507.7" x2="924.9" y2="500.9" stroke="#e0e0e0" stroke-width="1.2"/>
<polygon points="898.0,415.6 899.9,414.5 926.3,429.8 924.5,430.8" fill="#000" stroke="#c4c4c4" stroke-width="1" stroke-linejoin="round"/>
<polygon points="848.9,420.9 850.7,419.8 897.1,446.6 895.3,447.7" fill="#000" stroke="#c4c4c4" stroke-width="1" stroke-linejoin="round"/>
<polygon points="848.9,568.1 895.3,594.9 895.3,447.7 848.9,420.9" fill="#000" stroke="#c4c4c4" stroke-width="1" stroke-linejoin="round"/>
<polygon points="895.3,594.9 897.1,593.8 897.1,446.6 895.3,447.7" fill="#000" stroke="#c4c4c4" stroke-width="1" stroke-linejoin="round"/>
<polygon points="998.9,600.8 1040.9,625.1 1040.9,573.7 998.9,549.5" fill="#000" stroke="#c4c4c4" stroke-width="1" stroke-linejoin="round"/>
<polygon points="1040.9,625.1 1123.2,577.6 1123.2,526.2 1040.9,573.7" fill="#000" stroke="#000" stroke-width="1" stroke-linejoin="round"/>
<polygon points="998.9,549.5 1081.2,502.0 1123.2,526.2 1040.9,573.7" fill="#000" stroke="#c4c4c4" stroke-width="1" stroke-linejoin="round"/>
<polygon points="1040.9,576.0 1123.2,528.5 1123.2,526.2 1040.9,573.7" fill="#000" stroke="#c4c4c4" stroke-width="1" stroke-linejoin="round"/>
<line x1="1040.9" y1="625.1" x2="1040.9" y2="573.7" stroke="#c4c4c4" stroke-width="1"/>
<line x1="1042.7" y1="624.0" x2="1042.7" y2="574.9" stroke="#9c9c9c" stroke-width="1"/>
<line x1="1042.7" y1="620.0" x2="1109.9" y2="570.4" stroke="#c4c4c4" stroke-width="1"/>
<path d="M1109.9 533.5 V570.4 L1122.5 576.2 V525" fill="none" stroke="#c4c4c4" stroke-width="1"/>
<polygon points="1001.9,569.3 1016.7,577.9 1016.7,564.3 1001.9,555.7" fill="none" stroke="#7d7d7d" stroke-width="1" stroke-linejoin="round" stroke-dasharray="6 5"/>
<polygon points="1022.1,581.0 1037.0,589.6 1037.0,576.0 1022.1,567.4" fill="none" stroke="#7d7d7d" stroke-width="1" stroke-linejoin="round" stroke-dasharray="6 5"/>
<polygon points="1001.9,596.5 1016.7,605.1 1016.7,591.5 1001.9,582.9" fill="none" stroke="#7d7d7d" stroke-width="1" stroke-linejoin="round" stroke-dasharray="6 5"/>
<polygon points="1022.1,608.2 1037.0,616.8 1037.0,595.6 1022.1,587.0" fill="none" stroke="#7d7d7d" stroke-width="1" stroke-linejoin="round" stroke-dasharray="6 5"/>
<line x1="1031.6" y1="619.7" x2="1031.6" y2="568.3" stroke="#9c9c9c" stroke-width="1" stroke-dasharray="9 4"/>
</svg>
<svg width="1280" height="720" viewBox="0 0 1280 720">
<g transform="translate(4.40 3.00)" ><path d="M3 0h16.4v15.8H0V3a3 3 0 0 1 3-3z" fill="#1a5fd8"/><path d="M0 15.8h19.4v5.6H2.5L0 19z" fill="#0a2a8c"/><path d="M0 3a3 3 0 0 1 3-3h2v15.8H0z" fill="#3f7fe8" opacity=".55"/><path d="M6.6 3.6h4.1c2.1 0 3.3 1.1 3.3 2.8 0 1.4-.8 2.3-2 2.6l2.6 3.8h-2.3l-2.3-3.6H8.6v3.6h-2zM8.6 5.3v2.5h1.9c1 0 1.5-.5 1.5-1.3 0-.8-.5-1.2-1.5-1.2z" fill="#fff"/></g>
<g transform="translate(31.00 7.50)" ><rect x=".7" y=".7" width="12.8" height="11.8" rx="1" fill="#f2f2f2" stroke="#3c3c3c" stroke-width="1.4"/><rect x=".7" y=".7" width="12.8" height="2.6" fill="#3c3c3c"/><path d="M2.6 5.6h2M2.6 7.8h2M2.6 10h2" stroke="#3c3c3c" stroke-width="1.3"/><rect x="6.2" y="4.6" width="6" height="6.6" fill="#fff" stroke="#777" stroke-width=".8"/><path d="M7.5 6.5h3.4M7.5 8h3.4M7.5 9.5h2.4" stroke="#666" stroke-width=".7"/></g>
<g transform="translate(58.70 9.20)" ><path d="M.8 10.2V1.6h4.4l1.4 1.6h6.6v2" fill="#e9e9e9" stroke="#3c3c3c" stroke-width="1.3" stroke-linejoin="round"/><path d="M.8 10.4l2.8-5.3h12.2l-3.2 5.3z" fill="#dcdcdc" stroke="#3c3c3c" stroke-width="1.3" stroke-linejoin="round"/></g>
<g transform="translate(83.00 6.00)" ><path d="M1.2.8h11.6l2.2 2.2v11.2H1.2z" fill="#4a4a4a" stroke="#3a3a3a" stroke-width="1" stroke-linejoin="round"/><rect x="3.4" y="1.4" width="9" height="5.6" fill="#dcdcdc"/><rect x="3.6" y="9.6" width="8.6" height="4.4" fill="#f4f4f4"/><rect x="5" y="10.6" width="1.6" height="2.6" fill="#444"/></g>
<g transform="translate(107.00 6.00)" ><path d="M7.6.8l6.2 3v7l-6.2 3.4-6.2-3.4v-7z" fill="#e4e4e4" stroke="#b5b5b5" stroke-width="1.2" stroke-linejoin="round"/><path d="M1.6 4l6 3 6-3M7.6 7v7" fill="none" stroke="#b9b9b9" stroke-width="1"/><path d="M8.6 8.6h6.2v5.8H8.6z" fill="#bdbdbd" opacity=".9"/><path d="M9 10.2h5.6M9 12h5.6" stroke="#a2a2a2" stroke-width="1"/></g>
<path d="M129.80 11.70 h5.40 l-2.70 3.20 z" fill="#1e1e1e"/>
<g transform="translate(142.50 7.20)" ><path d="M6.4.9L.9 5.6l5.5 4.7V7.5c3.6-.3 5.3 1.1 6 4.9h2.2C14.600 6.600 11.400 3.700 6.400 3.700z" fill="#fbfbfb" stroke="#3c3c3c" stroke-width="1.25" stroke-linejoin="round"/></g>
<path d="M166.00 11.70 h5.40 l-2.70 3.20 z" fill="#1e1e1e"/>
<g transform="translate(180.00 7.20)" ><path d="M9 .9l5.500 4.700L9 10.300V7.500c-3.600-.3-5.300 1.100-6 4.900H.8C.8 6.600 4 3.700 9 3.700z" fill="#dedede" stroke="#adadad" stroke-width="1.2" stroke-linejoin="round"/></g>
<path d="M201.80 11.70 h5.40 l-2.70 3.20 z" fill="#6a6a6a"/>
<g transform="translate(215.00 6.80)" ><path d="M3.600 4.300V.9h8.800v3.400" fill="#fafafa" stroke="#3c3c3c" stroke-width="1.300"/><rect x=".9" y="4.300" width="14.200" height="6.800" rx="1.800" fill="#fafafa" stroke="#3c3c3c" stroke-width="1.500"/><rect x="3.600" y="8.600" width="8.800" height="5" fill="#fafafa" stroke="#3c3c3c" stroke-width="1.300"/><path d="M3 6.600h10" stroke="#c4c4c4" stroke-width="1"/></g>
<g transform="translate(238.70 5.30)" ><path d="M.5.5h8.300l3.400 3.300v12.700H.5z" fill="#f5f7fa" stroke="#b9c0c8" stroke-width=".8"/><path d="M8.800.5v3.300h3.400z" fill="#d23a3a"/><rect x=".3" y="10.600" width="12.600" height="6" fill="#d8302a"/><text x="6.600" y="15.600" font-size="5.600" font-weight="bold" fill="#fff" text-anchor="middle" font-family="Liberation Sans, sans-serif">PDF</text><path d="M7 6h4.600V3.800l4.600 3.600-4.600 3.600V8.800H7z" fill="#2f86d6"/><path d="M2 4.500h4M2 6.500h3M2 8.500h4" stroke="#e7c9a0" stroke-width="1"/></g>
<path d="M262.500 4v20M293.700 4v20M408 4v20" stroke="#bdbdbd" stroke-width="1"/>
<g transform="translate(269.50 5.50)" ><path d="M1 .5v11.500M15.400 .5v11.500" stroke="#3c3c3c" stroke-width="1.400"/><path d="M2 3.800h12.400" stroke="#3c3c3c" stroke-width="1.200"/><path d="M1.600 3.800l3-2.200v4.400zM14.800 3.800l-3-2.200v4.400z" fill="#3c3c3c"/><circle cx="12.300" cy="9" r="2" fill="#f08a3c"/><path d="M9.800 12.600h5l-1.200-2h-2.600z" fill="#e9762a"/><path d="M12.300 12.600v3.400" stroke="#c85a1a" stroke-width="1.100"/></g>
<g transform="translate(300.60 7.00)" ><path d="M1.800 4h12" stroke="#243a78" stroke-width="1.300"/><path d="M.3 4l3.600-2.600v5.200zM15.300 4l-3.600-2.600v5.200z" fill="#243a78"/><rect x=".6" y="7.600" width="14.600" height="4" rx=".8" fill="#f5c518" stroke="#d9a40c" stroke-width=".9"/></g>
<path d="M323.80 11.70 h5.40 l-2.70 3.20 z" fill="#1e1e1e"/>
<g transform="translate(337.00 5.60)" ><path d="M3.400 12.800L12.600 3.600" stroke="#3c3c3c" stroke-width="1.300"/><path d="M2.600 13.600l1-4.200 3.200 3.200zM13.400 2.800l-1 4.200-3.200-3.200z" fill="#3c3c3c"/><path d="M.3 11l4.600 4.800M10.800.6l4.600 4.800" stroke="#3c3c3c" stroke-width="1.300"/></g>
<g transform="translate(361.50 6.00)" ><path d="M6.800 1.200h5.400l2.600 4.700-2.600 4.700H6.800L4.200 5.900z" fill="#fdfdfd" stroke="#3c3c3c" stroke-width="1.200"/><text x="9.500" y="8.400" font-size="6.600" font-weight="bold" text-anchor="middle" fill="#222" font-family="Liberation Sans, sans-serif">1</text><path d="M5 8.600H2.400v3" fill="none" stroke="#3c3c3c" stroke-width="1.100"/><circle cx="2.200" cy="13" r="1.500" fill="#fff" stroke="#3c3c3c" stroke-width="1.100"/></g>
<text x="392.600" y="20.600" font-size="19" font-weight="bold" fill="#333" stroke="#cecece" stroke-width=".5" text-anchor="middle" font-family="Liberation Sans, sans-serif">A</text>
<g transform="translate(416.00 6.60)" ><path d="M7.4 5.2L15 6.4V10.8L7.4 13.4z" fill="#fdfdfd" stroke="#3c3c3c" stroke-width="1.1" stroke-linejoin="round"/><path d="M.8 6.2L4 .9l3.4 4.300v8.200L.8 10.800z" fill="#f1f1f1" stroke="#3c3c3c" stroke-width="1.200" stroke-linejoin="round"/><path d="M4 .9l7.800 1.300L15.200 6.400 7.400 5.200z" fill="#d9d9d9" stroke="#3c3c3c" stroke-width="1.100" stroke-linejoin="round"/><path d="M2.800 11.400V8l1.900.7v3.400" fill="#555" stroke="#3c3c3c" stroke-width=".8"/></g>
<path d="M438.30 11.70 h5.40 l-2.70 3.20 z" fill="#1e1e1e"/>
<g transform="translate(452.50 5.50)" ><path d="M5 .8v1.800M5 11.400v2" stroke="#3c3c3c" stroke-width="1.200"/><path d="M5 1.800l8.400 5.200L5 12.200z" fill="#3c3c3c"/><circle cx="5" cy="7" r="3.700" fill="#fafafa" stroke="#3c3c3c" stroke-width="1.200"/></g>
<g transform="translate(472.00 2.30)" ><rect x=".7" y=".7" width="22.600" height="20.800" fill="#cbe3f9" stroke="#3a8ee6" stroke-width="1.400"/><path d="M4.200 6.400h7M4.200 11.400h5.600M4.200 16.400h4" stroke="#173f34" stroke-width="2.600"/><path d="M14 6.400h6.200M12.400 11.400h7.800M10.800 16.400h9.400" stroke="#2b3f4f" stroke-width="1"/><path d="M14.200 3.600L8.800 19" stroke="#3a8ee6" stroke-width="1.300"/></g>
<g transform="translate(508.00 6.00)" ><rect x=".6" y=".6" width="5.400" height="6" fill="#f4f4f4" stroke="#9d9d9d" stroke-width=".9"/><rect x="8.400" y="1.200" width="5.400" height="6" fill="#f4f4f4" stroke="#bdbdbd" stroke-width=".9"/><rect x="1.200" y="8.400" width="5.400" height="6" fill="#f4f4f4" stroke="#bdbdbd" stroke-width=".9"/><path d="M8.800 10l5.600 5.600M14.400 10l-5.600 5.600" stroke="#e02020" stroke-width="2"/></g>
<g transform="translate(530.60 6.00)" ><rect x="1.300" y=".8" width="10.600" height="7.600" fill="#fafafa" stroke="#3c3c3c" stroke-width="1.300"/><rect x="1.300" y=".8" width="10.600" height="2" fill="#3c3c3c"/><rect x="6" y="7.800" width="10" height="6.800" fill="#fafafa" stroke="#3c3c3c" stroke-width="1.300"/><rect x="6" y="7.800" width="10" height="1.800" fill="#3c3c3c"/><path d="M13.600 1.200c1.600.4 2.400 1.600 2.400 3.400M3.400 14c-1.600-.4-2.400-1.600-2.400-3.400" fill="none" stroke="#3c3c3c" stroke-width="1.100"/><path d="M14.600 4.200h2.800L16 6.400zM-.4 11h2.800L1 8.800z" fill="#3c3c3c"/></g>
<path d="M551.70 11.70 h5.40 l-2.70 3.20 z" fill="#1e1e1e"/>
<path d="M565.600 10.400h9" stroke="#1e1e1e" stroke-width="1.300"/>
<path d="M566.40 12.20 h7.40 l-3.70 4.00 z" fill="#1e1e1e"/>
<path d="M928.600 10.400v6.400l-4-3.200z" fill="#1e1e1e"/>
<g transform="translate(936.60 7.00)" ><path d="M2.200 5L4 1h3l.6 3.600h2.200L10.400 1h3l1.800 4v7.600a2 2 0 0 1-2 2h-1.400a2 2 0 0 1-2-2V7.800H7.600v4.800a2 2 0 0 1-2 2H4.200a2 2 0 0 1-2-2z" fill="#fafafa" stroke="#2a2a2a" stroke-width="1.250" stroke-linejoin="round"/><path d="M2.200 6.400h5.400M9.800 6.400h5.400" stroke="#2a2a2a" stroke-width="1"/></g>
<g transform="translate(961.50 7.00)" ><circle cx="8.200" cy="4.600" r="3.900" fill="#2f6fd6" stroke="#1d3f9a" stroke-width="1"/><path d="M.8 14.400c.4-3.600 3-5.200 7.400-5.200s7 1.600 7.400 5.200z" fill="#2f6fd6" stroke="#1d3f9a" stroke-width="1" stroke-linejoin="round"/></g>
<path d="M1067.30 12.20 h4.60 l-2.30 2.80 z" fill="#1e1e1e"/>
<g transform="translate(1083.00 7.00)" ><path d="M.6 1h2.600l2.400 8.400h8.200l1.800-5.800H4" fill="#eef2fb" stroke="#26348a" stroke-width="1.300" stroke-linejoin="round" stroke-linecap="round"/><circle cx="6.600" cy="12.200" r="1.500" fill="#fff" stroke="#26348a" stroke-width="1.100"/><circle cx="12.600" cy="12.200" r="1.500" fill="#fff" stroke="#26348a" stroke-width="1.100"/></g>
<path d="M1108.600 4v20" stroke="#bdbdbd" stroke-width="1"/>
<circle cx="1126" cy="13.600" r="7.600" fill="#fcfcff" stroke="#1f2a78" stroke-width="1.400"/><text x="1126" y="18" font-size="12.500" font-weight="bold" fill="#1f3fc0" text-anchor="middle" font-family="Liberation Sans, sans-serif">?</text>
<path d="M1141.30 12.20 h4.60 l-2.30 2.80 z" fill="#1e1e1e"/>
<path d="M1212 19.700h9" stroke="#1a1a1a" stroke-width="1.600"/>
<path d="M1235.500 11.600h9.400v7.600h-9.400z" fill="none" stroke="#1a1a1a" stroke-width="1.400"/><path d="M1238.200 11.400V9h9.400v7.400h-2.600" fill="none" stroke="#1a1a1a" stroke-width="1.400"/>
<path d="M1261 8.800l10.600 10.400M1271.600 8.800L1261 19.200" stroke="#1a1a1a" stroke-width="1.600"/>
<rect x="974.500" y="38.200" width="14.600" height="7.400" rx="2" fill="#fafafa" stroke="#2a2a2a" stroke-width="1.100"/><path d="M979.200 43.400h5.200l-2.600-2.800z" fill="#2a2a2a"/>
<path d="M994.10 40.80 h4.60 l-2.30 2.80 z" fill="#1e1e1e"/>
<g transform="translate(24.00 61.70)" ><path d="M1 .8v16.400l4-3.800 2.600 6.200 2.600-1.100-2.600-6h5.400z" fill="#fdfdfd" stroke="#2a2a2a" stroke-width="1.300" stroke-linejoin="round"/></g>
<path d="M46.50 135.00 h6.40 l-3.20 3.60 z" fill="#1e1e1e"/>
<g transform="translate(94.50 57.00)" ><path d="M1.400 8.600h20.400l4 4V30H1.400z" fill="#4d5157" stroke="#3a3d42" stroke-width="1" stroke-linejoin="round"/><rect x="5" y="9.400" width="17" height="10.400" fill="#e6e6e6"/><rect x="5.600" y="22" width="16.600" height="8" fill="#f6f6f6"/><rect x="8" y="23.600" width="2.400" height="5" fill="#3f4348"/><circle cx="23" cy="8.200" r="7.600" fill="#5aa7d8" stroke="#3a6f96" stroke-width="1"/><path d="M19 3.600c2-.6 3.600.2 4.200 1.600.6 1.400 2.600.6 3.200 2.200.6 1.600-1.200 2-1.400 3.600-.2 1.400-1.400 2.200-2.200 1-.8-1.200.4-2.400-.8-3.400-1.200-1-2.800-.4-3.400-2-.4-1.200-.2-2.200.4-3z" fill="#5cb85a"/><path d="M17.600 11c1 .2 1.600 1 1.400 2.400" stroke="#5cb85a" stroke-width="1.600" fill="none"/></g>
<g transform="translate(245.30 56.00)" ><path d="M3.600 1.600C3.600.8 4.400.4 5.200.4h17.600l7 6.600v19.600H1.400V6.600z" fill="#f4f7fc" stroke="#1858c8" stroke-width="1.300" stroke-linejoin="round"/><path d="M1.400 6.600l2.200-5v25" fill="#a9c6f2" stroke="#1858c8" stroke-width="1"/><path d="M1.200 24h28.800v8.600H1.200z" fill="#0c3a9a"/><path d="M22.600.6v6.600h7z" fill="#1858c8"/><text x="15.600" y="31" font-size="6.600" font-weight="bold" fill="#fff" text-anchor="middle" font-family="Liberation Sans, sans-serif">RFA</text><path d="M11 6.600h6c3 0 4.800 1.600 4.800 4.200 0 2-1.100 3.400-2.900 3.900l3.700 5.700h-3.400l-3.300-5.300h-2v5.300H11zM13.900 9.200v3.700h2.800c1.400 0 2.200-.7 2.200-1.900s-.8-1.800-2.200-1.800z" fill="#1858d0"/></g>
<g transform="translate(331.00 57.80)" ><rect x="-3" y="-2.600" width="35" height="35.800" fill="#fbfbfb"/><path d="M1.600 1.200h16.800l7.200 7.200v21.400H1.600z" fill="#f0f0f0" stroke="#555" stroke-width="1.400" stroke-linejoin="round"/><path d="M18.400 1.200v7.200h7.200" fill="#fdfdfd" stroke="#777" stroke-width="1.100"/><text x="10.200" y="21.400" font-size="13" font-weight="bold" fill="#111" text-anchor="middle" font-family="Liberation Sans, sans-serif" transform="scale(1.150 1)" style="transform-origin:10px 20px">K</text><path d="M17.600 17.600h9.200v5.400h4.600l-6.600 8-6.800-8h4.400v-2h-4.800z" fill="#2f8ae0" stroke="#1b62b4" stroke-width=".8" stroke-linejoin="round"/></g>
<path d="M344.10 111.20 h4.60 l-2.30 2.80 z" fill="#1e1e1e"/>
<g transform="translate(374.00 178.00)" ><path d="M.7 2.600h8.600v10H.7z" fill="#f4f4f4" stroke="#4a4a4a" stroke-width="1.200"/><path d="M5.400.7h7.200l2.600 2.600v9.600H5.400z" fill="#fbfbfb" stroke="#4a4a4a" stroke-width="1.200" stroke-linejoin="round"/><path d="M7.400 10.600V5.600h3.400v2.200h2.400" fill="none" stroke="#9a9a9a" stroke-width=".9"/></g>
<path d="M483 181.900l8.200 7.600M491.200 181.900l-8.200 7.600" stroke="#111" stroke-width="1.600"/>
<g transform="translate(502.50 177.70)" ><path d="M7.400 5.200L15 6.400V10.800L7.400 13.400z" fill="#f2f2f2" stroke="#9c9c9c" stroke-width="1.100" stroke-linejoin="round"/><path d="M.8 6.200L4 .9l3.400 4.300v8.200L.8 10.800z" fill="#e4e4e4" stroke="#9c9c9c" stroke-width="1.200" stroke-linejoin="round"/><path d="M4 .9l7.800 1.300L15.200 6.400 7.400 5.200z" fill="#c9c9c9" stroke="#9c9c9c" stroke-width="1.100" stroke-linejoin="round"/><path d="M2.800 11.400V8l1.900.7v3.400" fill="#9a9a9a" stroke="#9a9a9a" stroke-width=".8"/></g>
<path d="M1266 182.200h9" stroke="#1e1e1e" stroke-width="1.300"/>
<path d="M1266.50 184.70 h8.00 l-4.00 4.60 z" fill="#1e1e1e"/>
<g transform="translate(450.70 677.50)" ><rect x=".6" y=".6" width="15.200" height="11" fill="#f3f3f3" stroke="#6a6a6a" stroke-width="1.200"/></g>
<g transform="translate(471.60 677.00)" ><path d="M.7 4.600L4 .8h11.600v8l-3.300 3.600H.7z" fill="#f0f0f0" stroke="#4a4a4a" stroke-width="1.200" stroke-linejoin="round"/><path d="M.7 4.600h11.600l3.300-3.800M12.300 4.600v7.800" fill="none" stroke="#4a4a4a" stroke-width="1.100"/></g>
<g transform="translate(491.80 676.50)" ><circle cx="6.400" cy="6.400" r="3.600" fill="#fff3a0" stroke="#d9a400" stroke-width="1.300"/><path d="M6.400 0v2M6.400 10.800v2M0 6.400h2M10.800 6.400h2M1.900 1.900l1.400 1.400M9.500 9.500l1.400 1.400M1.900 10.900l1.400-1.400M9.500 3.300l1.400-1.400" stroke="#d9a400" stroke-width="1.200"/><path d="M9 8.400l5.600 5.600M14.600 8.400L9 14" stroke="#dd1c1c" stroke-width="2.100"/></g>
<g transform="translate(515.00 677.00)" ><circle cx="5.600" cy="5.200" r="4.400" fill="#e8f1fc" stroke="#2f72c8" stroke-width="1.400"/><path d="M1 12.200h10" stroke="#1d3f88" stroke-width="1.600"/><path d="M8.400 8l5.400 5.400M13.800 8l-5.400 5.400" stroke="#dd1c1c" stroke-width="2.100"/></g>
<g transform="translate(533.70 677.00)" ><rect x="3" y="2.600" width="10.600" height="8.600" fill="#cfe2f8" stroke="#2f72c8" stroke-width="1.500"/><path d="M0 8h3M6.400.4v2.200" stroke="#2f72c8" stroke-width="1.800"/><path d="M8.600 6.800l5.600 5.600M14.200 6.800l-5.600 5.600" stroke="#dd1c1c" stroke-width="2.100"/></g>
<g transform="translate(555.00 677.00)" ><rect x="3" y="2.600" width="9" height="8.600" fill="#cfe2f8" stroke="#2f72c8" stroke-width="1.500"/><path d="M0 8h3M6 .4v2.200" stroke="#2f72c8" stroke-width="1.800"/><circle cx="12.600" cy="5.200" r="3" fill="#f4faff" stroke="#3b86d8" stroke-width="1.100"/><path d="M11.400 8.400h2.400v2.600h-2.400z" fill="#dfefff" stroke="#3b86d8" stroke-width=".8"/></g>
<g transform="translate(575.70 678.00)" ><path d="M.6 1.600l4 6.800M15.800 1.600l-3.600 5" fill="none" stroke="#444" stroke-width="1.200"/><circle cx="5.800" cy="9" r="2.600" fill="#f7f7f7" stroke="#444" stroke-width="1.200"/><circle cx="11.600" cy="7.400" r="2.600" fill="#f7f7f7" stroke="#444" stroke-width="1.200"/><path d="M8.200 8.200l1-.4" stroke="#444" stroke-width="1.100"/></g>
<g transform="translate(600.00 678.00)" ><circle cx="4" cy="4.400" r="3.300" fill="#eaf4ff" stroke="#2f7fd8" stroke-width="1.400"/><path d="M2.600 8.200h2.800v3H2.600z" fill="#cfe4fb" stroke="#2f7fd8" stroke-width="1"/></g>
<g transform="translate(617.70 677.50)" ><rect x=".8" y="2.600" width="14" height="9.400" rx="1" fill="#f2f2f2" stroke="#222" stroke-width="1.500" stroke-dasharray="2.600 1.200"/><path d="M4 2.600V.8h3.600v1.800" fill="none" stroke="#222" stroke-width="1.200"/><circle cx="11" cy="8.600" r="2.600" fill="#fff" stroke="#222" stroke-width="1.200"/></g>
<g transform="translate(638.00 677.00)" ><path d="M.8 5.600L5.600 1.200h7.200v11.200H.8z" fill="#f1e4e4" stroke="#6a2a2a" stroke-width="1.100"/><path d="M.8 8.400h12M4.600 2.200v10.200M8.600 1.200v11.200" stroke="#a83030" stroke-width="1.100"/><circle cx="12.800" cy="5.600" r="3.200" fill="#ffe066" stroke="#e0a800" stroke-width="1"/><path d="M11.600 9h2.400v2.400h-2.400z" fill="#ffeeaa" stroke="#c89600" stroke-width=".7"/></g>
<g transform="translate(659.70 676.50)" ><path d="M.8 0v13M15.800 0v7" stroke="#444" stroke-width="1.200"/><path d="M1.400 2.600h13.800" stroke="#444" stroke-width="1.100"/><path d="M1 2.600l2.600-1.800v3.600zM15.600 2.600L13 .8v3.600z" fill="#444"/><path d="M2 9h5" stroke="#888" stroke-width="1" stroke-dasharray="1.500 1"/><rect x="8.600" y="8.200" width="6.800" height="5" rx=".8" fill="#6a6a6a"/><path d="M10 8.200V6.800a2 2 0 0 1 4 0v1.400" fill="none" stroke="#6a6a6a" stroke-width="1.200"/></g>
<g transform="translate(409.00 697.50)" ><path d="M4 6.600l4.200 2v5.600L4 16.600 0 14.200V8.600z" fill="#dfeeff" stroke="#1f62c8" stroke-width="1.500" stroke-linejoin="round"/><path d="M3 5.400C3 1 9.600 .6 10.600 4.600" fill="none" stroke="#3a9a2a" stroke-width="1.600"/><path d="M9 4l2 2.200 1-2.800z" fill="#3a9a2a"/><path d="M11 7.400l1.800 3.200v6h2.200v-6l1.800-3.200" fill="#f4f4fa" stroke="#7a82a8" stroke-width="1.300" stroke-linejoin="round"/></g>
<path d="M619.600 701.600l3.600 3.400 3.600-3.400" fill="none" stroke="#8a8a8a" stroke-width="1"/>
<path d="M896.600 701.600l3.600 3.400 3.600-3.400" fill="none" stroke="#b5b5b5" stroke-width="1"/>
<g transform="translate(634.00 698.00)" ><rect x="5" y=".6" width="8.400" height="5" rx="1" fill="#dcdcdc" stroke="#aaaaaa" stroke-width="1"/><path d="M8.400 5.800L3.600 12" stroke="#aaaaaa" stroke-width="2.200"/><path d="M1 15.600l1.600-4h4l1.600 4z" fill="#a4a4a4"/></g>
<g transform="translate(666.00 699.30)" ><rect x=".8" y=".8" width="14.400" height="13.400" rx="1.200" fill="#fafafa" stroke="#2e2e2e" stroke-width="1.500"/><rect x=".8" y=".8" width="14.400" height="2.600" fill="#2e2e2e"/><path d="M3.400 6.400h1.400M3.400 9h1.400M3.400 11.600h1.400" stroke="#2e2e2e" stroke-width="1.400"/><path d="M6.600 6.400h6.400M6.600 9h6.400M6.600 11.600h6.400" stroke="#2e2e2e" stroke-width="1.200"/></g>
<g transform="translate(687.00 698.50)" ><rect x=".6" y=".6" width="13" height="13.600" fill="#c2c2c2" stroke="#b0b0b0" stroke-width=".8"/><path d="M2.600 8.400l3.400-3v2h4.600v2.400H6v2z" fill="#e9e9e9" transform="rotate(-35 7 7.500)"/></g>
<g transform="translate(1120.40 698.00)" ><g fill="none" stroke="#d9a10c" stroke-width="2"><rect x=".8" y="1.200" width="8" height="5.400" rx="2.700"/><rect x="7.200" y="1.200" width="8" height="5.400" rx="2.700"/></g><g transform="translate(6.500 4.500)"><path d="M0 0v9.6l2.300-2.200 1.600 3.800 1.600-.7-1.600-3.700h3.200z" fill="#fdfdfd" stroke="#222" stroke-width=".9" stroke-linejoin="round"/></g></g>
<g transform="translate(1140.80 698.00)" ><path d="M.6 9.600L9 1.200M.6 9.600h9M2.600 12.400h7" fill="none" stroke="#2a78d0" stroke-width="1.400"/><path d="M9.600.4l5 5M14.600.4l-5 5" stroke="#dd1c1c" stroke-width="2"/><g transform="translate(9.200 5)"><path d="M0 0v9.6l2.300-2.200 1.600 3.800 1.600-.7-1.600-3.700h3.200z" fill="#fdfdfd" stroke="#222" stroke-width=".9" stroke-linejoin="round"/></g></g>
<g transform="translate(1161.90 698.00)" ><rect x="2" y=".8" width="7.600" height="3" rx="1" fill="#f08a5a" stroke="#c9481e" stroke-width="1"/><path d="M3.200 3.800h5.200l1.600 4.600H1.600z" fill="#f6a070" stroke="#c9481e" stroke-width="1"/><path d="M5.800 8.400v6" stroke="#444" stroke-width="1.100"/><g transform="translate(9.200 5)"><path d="M0 0v9.6l2.300-2.200 1.600 3.800 1.600-.7-1.600-3.700h3.200z" fill="#fdfdfd" stroke="#222" stroke-width=".9" stroke-linejoin="round"/></g></g>
<g transform="translate(1183.00 698.00)" ><path d="M.8 3L7.400 1v11l-6.600 2z" fill="#bcd9f8" stroke="#2a78d0" stroke-width="1.400" stroke-linejoin="round"/><path d="M9.800.4l5 5M14.800.4l-5 5" stroke="#dd1c1c" stroke-width="2"/><g transform="translate(9.200 5)"><path d="M0 0v9.6l2.300-2.200 1.600 3.800 1.600-.7-1.600-3.700h3.200z" fill="#fdfdfd" stroke="#222" stroke-width=".9" stroke-linejoin="round"/></g></g>
<g transform="translate(1203.40 698.00)" ><path d="M4.400 0v8.800M0 4.400h8.800" stroke="#111" stroke-width="1.300"/><path d="M4.400-.6l1.800 2.200H2.600zM4.400 9.400l1.800-2.200H2.600zM-.6 4.400l2.200-1.800v3.600zM9.400 4.400L7.200 2.600v3.600z" fill="#111"/><g transform="translate(8.400 5)"><path d="M0 0v9.6l2.300-2.200 1.600 3.800 1.600-.7-1.600-3.700h3.200z" fill="#fdfdfd" stroke="#222" stroke-width=".9" stroke-linejoin="round"/></g></g>
<circle cx="1231.800" cy="706.500" r="5.600" fill="none" stroke="#b2b2b2" stroke-width="2.400" stroke-dasharray="2.600 1.400"/>
<g transform="translate(1242.70 699.00)" ><path d="M.8 .8h14.400L9.800 7.600v5.200l-3.600 1.600V7.600z" fill="#eeeeee" stroke="#555" stroke-width="1.300" stroke-linejoin="round"/><path d="M2 2.600h12" stroke="#999" stroke-width="1"/></g>
<rect x="1274.0" y="688.5" width="1.800" height="1.800" fill="#b0b0b0"/>
<rect x="1270.5" y="688.5" width="1.800" height="1.800" fill="#b0b0b0"/>
<rect x="1267.0" y="688.5" width="1.800" height="1.800" fill="#b0b0b0"/>
<rect x="1274.0" y="685.0" width="1.800" height="1.800" fill="#b0b0b0"/>
<rect x="1270.5" y="685.0" width="1.800" height="1.800" fill="#b0b0b0"/>
<rect x="1274.0" y="681.5" width="1.800" height="1.800" fill="#b0b0b0"/>
<path d="M1253.400 200.500l4 4M1257.400 200.500l-4 4" stroke="#f2f2f2" stroke-width="1.100"/>
<path d="M1239 213.800h9a4 4 0 0 1 4 4v9.400a3 3 0 0 1-3 3h-10a4 4 0 0 1-4-4v-8.400a4 4 0 0 1 4-4z" fill="#c9c9c9"/><circle cx="1243.300" cy="222.200" r="4.100" fill="#c9c9c9" stroke="#4d4d4d" stroke-width="1.300"/><path d="M1246 225.400l4 4" stroke="#4d4d4d" stroke-width="1.300"/><path d="M1247 229.500c2 2.500 5 2 6-1" fill="none" stroke="#3b6fb0" stroke-width="1.800"/>
<rect x="1238" y="258.600" width="10.200" height="9.800" fill="#70884a"/><circle cx="1248.700" cy="268.700" r="2.600" fill="#b9bec6" stroke="#6a6a6a" stroke-width=".6"/>
<path d="M1253 294.200h5" stroke="#e4e4e4" stroke-width="1"/><path d="M1253 296l2.500 2.800 2.500-2.800z" fill="#e4e4e4"/>
</svg>
<svg width="1280" height="720" viewBox="0 0 1280 720">
<path d="M11.5 195.0 V671.3" stroke="#ebebeb" stroke-width="1" fill="none"/>
<path d="M31.5 195.0 V471.2" stroke="#ebebeb" stroke-width="1" fill="none"/>
<path d="M51.5 195.0 V204.3" stroke="#ebebeb" stroke-width="1" fill="none"/>
<path d="M51.5 226.0 V387.8" stroke="#ebebeb" stroke-width="1" fill="none"/>
<path d="M51.5 409.5 V471.2" stroke="#ebebeb" stroke-width="1" fill="none"/>
<path d="M31.5 526.2 V571.3" stroke="#ebebeb" stroke-width="1" fill="none"/>
<path d="M31.5 609.6 V638.0" stroke="#ebebeb" stroke-width="1" fill="none"/>
<path d="M51.5 643.0 V654.7" stroke="#ebebeb" stroke-width="1" fill="none"/>
<path d="M51.5 204.3 H63.0" stroke="#ebebeb" stroke-width="1" fill="none"/>
<path d="M51.5 237.7 H63.0" stroke="#ebebeb" stroke-width="1" fill="none"/>
<path d="M51.5 254.3 H63.0" stroke="#ebebeb" stroke-width="1" fill="none"/>
<path d="M51.5 271.0 H63.0" stroke="#ebebeb" stroke-width="1" fill="none"/>
<path d="M51.5 287.7 H63.0" stroke="#ebebeb" stroke-width="1" fill="none"/>
<path d="M51.5 304.4 H63.0" stroke="#ebebeb" stroke-width="1" fill="none"/>
<path d="M51.5 321.1 H63.0" stroke="#ebebeb" stroke-width="1" fill="none"/>
<path d="M51.5 337.7 H63.0" stroke="#ebebeb" stroke-width="1" fill="none"/>
<path d="M51.5 354.4 H63.0" stroke="#ebebeb" stroke-width="1" fill="none"/>
<path d="M51.5 371.1 H63.0" stroke="#ebebeb" stroke-width="1" fill="none"/>
<path d="M51.5 387.8 H63.0" stroke="#ebebeb" stroke-width="1" fill="none"/>
<path d="M51.5 421.1 H63.0" stroke="#ebebeb" stroke-width="1" fill="none"/>
<path d="M51.5 437.8 H63.0" stroke="#ebebeb" stroke-width="1" fill="none"/>
<path d="M51.5 454.5 H63.0" stroke="#ebebeb" stroke-width="1" fill="none"/>
<path d="M51.5 471.2 H63.0" stroke="#ebebeb" stroke-width="1" fill="none"/>
<path d="M36.0 221.0 H44.0" stroke="#ebebeb" stroke-width="1" fill="none"/>
<path d="M36.0 404.5 H44.0" stroke="#ebebeb" stroke-width="1" fill="none"/>
<path d="M11.5 487.9 H23.0" stroke="#ebebeb" stroke-width="1" fill="none"/>
<path d="M11.5 671.3 H23.0" stroke="#ebebeb" stroke-width="1" fill="none"/>
<path d="M16.0 504.5 H23.0" stroke="#ebebeb" stroke-width="1" fill="none"/>
<path d="M16.0 521.2 H23.0" stroke="#ebebeb" stroke-width="1" fill="none"/>
<path d="M16.0 587.9 H23.0" stroke="#ebebeb" stroke-width="1" fill="none"/>
<path d="M16.0 604.6 H23.0" stroke="#ebebeb" stroke-width="1" fill="none"/>
<path d="M36.0 537.9 H44.0" stroke="#ebebeb" stroke-width="1" fill="none"/>
<path d="M36.0 554.6 H44.0" stroke="#ebebeb" stroke-width="1" fill="none"/>
<path d="M36.0 571.3 H44.0" stroke="#ebebeb" stroke-width="1" fill="none"/>
<path d="M36.0 638.0 H44.0" stroke="#ebebeb" stroke-width="1" fill="none"/>
<path d="M31.5 621.3 H44.0" stroke="#ebebeb" stroke-width="1" fill="none"/>
<path d="M56.0 654.7 H63.0" stroke="#ebebeb" stroke-width="1" fill="none"/>
<rect x="63.5" y="196.0" width="15.5" height="15.5" fill="none" stroke="#585858" stroke-width="1" stroke-dasharray="2 1.3"/>
<rect x="65.5" y="198.0" width="11.5" height="10.5" fill="#efefef" stroke="#8a8a8a" stroke-width="1"/>
<rect x="63.5" y="229.4" width="15.5" height="15.5" fill="none" stroke="#585858" stroke-width="1" stroke-dasharray="2 1.3"/>
<rect x="65.5" y="231.4" width="11.5" height="10.5" fill="#efefef" stroke="#8a8a8a" stroke-width="1"/>
<rect x="63.5" y="246.0" width="15.5" height="15.5" fill="none" stroke="#585858" stroke-width="1" stroke-dasharray="2 1.3"/>
<rect x="65.5" y="248.0" width="11.5" height="10.5" fill="#efefef" stroke="#8a8a8a" stroke-width="1"/>
<rect x="63.5" y="262.7" width="15.5" height="15.5" fill="none" stroke="#585858" stroke-width="1" stroke-dasharray="2 1.3"/>
<rect x="65.5" y="264.7" width="11.5" height="10.5" fill="#4ea2e8" stroke="#4a90d0" stroke-width="1"/>
<rect x="63.5" y="279.4" width="15.5" height="15.5" fill="none" stroke="#585858" stroke-width="1" stroke-dasharray="2 1.3"/>
<rect x="65.5" y="281.4" width="11.5" height="10.5" fill="#4ea2e8" stroke="#4a90d0" stroke-width="1"/>
<rect x="63.5" y="296.1" width="15.5" height="15.5" fill="none" stroke="#585858" stroke-width="1" stroke-dasharray="2 1.3"/>
<rect x="65.5" y="298.1" width="11.5" height="10.5" fill="#efefef" stroke="#8a8a8a" stroke-width="1"/>
<rect x="63.5" y="312.8" width="15.5" height="15.5" fill="none" stroke="#585858" stroke-width="1" stroke-dasharray="2 1.3"/>
<rect x="65.5" y="314.8" width="11.5" height="10.5" fill="#efefef" stroke="#8a8a8a" stroke-width="1"/>
<rect x="63.5" y="329.4" width="15.5" height="15.5" fill="none" stroke="#585858" stroke-width="1" stroke-dasharray="2 1.3"/>
<rect x="65.5" y="331.4" width="11.5" height="10.5" fill="#efefef" stroke="#8a8a8a" stroke-width="1"/>
<rect x="63.5" y="346.1" width="15.5" height="15.5" fill="none" stroke="#585858" stroke-width="1" stroke-dasharray="2 1.3"/>
<rect x="65.5" y="348.1" width="11.5" height="10.5" fill="#efefef" stroke="#8a8a8a" stroke-width="1"/>
<rect x="63.5" y="362.8" width="15.5" height="15.5" fill="none" stroke="#585858" stroke-width="1" stroke-dasharray="2 1.3"/>
<rect x="65.5" y="364.8" width="11.5" height="10.5" fill="#efefef" stroke="#8a8a8a" stroke-width="1"/>
<rect x="63.5" y="379.5" width="15.5" height="15.5" fill="none" stroke="#585858" stroke-width="1" stroke-dasharray="2 1.3"/>
<rect x="65.5" y="381.5" width="11.5" height="10.5" fill="#efefef" stroke="#8a8a8a" stroke-width="1"/>
<rect x="63.5" y="412.8" width="15.5" height="15.5" fill="none" stroke="#585858" stroke-width="1" stroke-dasharray="2 1.3"/>
<rect x="65.5" y="414.8" width="11.5" height="10.5" fill="#efefef" stroke="#8a8a8a" stroke-width="1"/>
<rect x="63.5" y="429.5" width="15.5" height="15.5" fill="none" stroke="#585858" stroke-width="1" stroke-dasharray="2 1.3"/>
<rect x="65.5" y="431.5" width="11.5" height="10.5" fill="#efefef" stroke="#8a8a8a" stroke-width="1"/>
<rect x="63.5" y="446.2" width="15.5" height="15.5" fill="none" stroke="#585858" stroke-width="1" stroke-dasharray="2 1.3"/>
<rect x="65.5" y="448.2" width="11.5" height="10.5" fill="#4ea2e8" stroke="#4a90d0" stroke-width="1"/>
<rect x="63.5" y="462.9" width="15.5" height="15.5" fill="none" stroke="#585858" stroke-width="1" stroke-dasharray="2 1.3"/>
<rect x="65.5" y="464.9" width="11.5" height="10.5" fill="#efefef" stroke="#8a8a8a" stroke-width="1"/>
<rect x="27.0" y="216.5" width="9" height="9" fill="#fbfbfb" stroke="#cfcfcf" stroke-width="1"/>
<path d="M29.0 221.0 h5" stroke="#3b4766" stroke-width="1.1" fill="none"/>
<rect x="27.0" y="400.0" width="9" height="9" fill="#fbfbfb" stroke="#cfcfcf" stroke-width="1"/>
<path d="M29.0 404.5 h5" stroke="#3b4766" stroke-width="1.1" fill="none"/>
<rect x="7.0" y="516.7" width="9" height="9" fill="#fbfbfb" stroke="#cfcfcf" stroke-width="1"/>
<path d="M9.0 521.2 h5" stroke="#3b4766" stroke-width="1.1" fill="none"/>
<rect x="7.0" y="600.1" width="9" height="9" fill="#fbfbfb" stroke="#cfcfcf" stroke-width="1"/>
<path d="M9.0 604.6 h5" stroke="#3b4766" stroke-width="1.1" fill="none"/>
<rect x="26.8" y="633.5" width="9" height="9" fill="#fbfbfb" stroke="#cfcfcf" stroke-width="1"/>
<path d="M28.8 638.0 h5" stroke="#3b4766" stroke-width="1.1" fill="none"/>
<rect x="7.0" y="500.0" width="9" height="9" fill="#fbfbfb" stroke="#cfcfcf" stroke-width="1"/>
<path d="M9.0 504.5 h5" stroke="#3b4766" stroke-width="1.1" fill="none"/>
<path d="M11.5 502.0 v5" stroke="#3b4766" stroke-width="1.1" fill="none"/>
<rect x="7.0" y="583.4" width="9" height="9" fill="#fbfbfb" stroke="#cfcfcf" stroke-width="1"/>
<path d="M9.0 587.9 h5" stroke="#3b4766" stroke-width="1.1" fill="none"/>
<path d="M11.5 585.4 v5" stroke="#3b4766" stroke-width="1.1" fill="none"/>
<rect x="26.8" y="533.4" width="9" height="9" fill="#fbfbfb" stroke="#cfcfcf" stroke-width="1"/>
<path d="M28.8 537.9 h5" stroke="#3b4766" stroke-width="1.1" fill="none"/>
<path d="M31.3 535.4 v5" stroke="#3b4766" stroke-width="1.1" fill="none"/>
<rect x="26.8" y="550.1" width="9" height="9" fill="#fbfbfb" stroke="#cfcfcf" stroke-width="1"/>
<path d="M28.8 554.6 h5" stroke="#3b4766" stroke-width="1.1" fill="none"/>
<path d="M31.3 552.1 v5" stroke="#3b4766" stroke-width="1.1" fill="none"/>
<rect x="26.8" y="566.8" width="9" height="9" fill="#fbfbfb" stroke="#cfcfcf" stroke-width="1"/>
<path d="M28.8 571.3 h5" stroke="#3b4766" stroke-width="1.1" fill="none"/>
<path d="M31.3 568.8 v5" stroke="#3b4766" stroke-width="1.1" fill="none"/>
<rect x="47.0" y="650.2" width="9" height="9" fill="#fbfbfb" stroke="#cfcfcf" stroke-width="1"/>
<path d="M49.0 654.7 h5" stroke="#3b4766" stroke-width="1.1" fill="none"/>
<path d="M51.5 652.2 v5" stroke="#3b4766" stroke-width="1.1" fill="none"/>
<g transform="translate(23.0 479.9)"><rect x="0.7" y="1.2" width="14.3" height="13.3" rx="1" fill="#e9e9e9" stroke="#484848" stroke-width="1.4"/><rect x="0.7" y="1.2" width="14.3" height="2.2" fill="#484848"/><rect x="3" y="5.2" width="3" height="2.6" fill="none" stroke="#484848" stroke-width="1"/><circle cx="4.5" cy="11.3" r="1.4" fill="none" stroke="#484848" stroke-width="1"/><path d="M8 6.5h5M8 11.3h5" stroke="#9a9a9a" stroke-width="2.2"/></g>
<g transform="translate(23.0 496.5)"><rect x="0.7" y="1.7" width="14.6" height="12.3" rx="1" fill="#f4f4f4" stroke="#484848" stroke-width="1.4"/><rect x="0.7" y="1.7" width="14.6" height="3" fill="#484848"/><path d="M1 8h14M1 11h14M5.5 5v9M10.5 5v9" stroke="#8a8a8a" stroke-width="0.9"/></g>
<g transform="translate(23.0 513.2)"><path d="M0.7 1h10l4.3 4v9.3h-14.3z" fill="#ededed" stroke="#484848" stroke-width="1.4"/><path d="M10.7 1v4h4.3" fill="none" stroke="#484848" stroke-width="1"/><path d="M3 12V5.5h5.5M5.5 12V8.5h5V12" fill="none" stroke="#484848" stroke-width="1.1"/><path d="M0.7 12.5h14.3" stroke="#484848" stroke-width="2"/></g>
<g transform="translate(23.0 579.9)"><path d="M1 1.5v12.7h13.7V1.5h-4.5V7H5.5V1.5z" fill="#f2f2f2" stroke="#484848" stroke-width="1.4" stroke-linejoin="round"/><rect x="3.3" y="1.2" width="4.6" height="4.6" fill="#f2f2f2" stroke="#484848" stroke-width="1.1"/></g>
<g transform="translate(23.0 596.6)"><path d="M3.5 1H1v14h2.5M12.5 1H15v14h-2.5" fill="none" stroke="#484848" stroke-width="1.4"/><circle cx="7" cy="7" r="3.6" fill="#eee" stroke="#484848" stroke-width="1.1"/><rect x="6" y="6.7" width="6.3" height="5.6" rx="1.4" fill="#eee" fill-opacity="0.7" stroke="#484848" stroke-width="1.1"/></g>
<g transform="translate(23.0 663.3)"><g fill="none" stroke="#d89b12" stroke-width="2.1"><rect x="1.2" y="5" width="7.4" height="5.6" rx="2.8"/><rect x="7.2" y="5" width="7.4" height="5.6" rx="2.8"/></g><path d="M5 7.8h6" stroke="#8a6a10" stroke-width="1.3"/></g>
<g transform="translate(62.7 646.7)"><path d="M3.5 1H1v14h2.5M12.5 1H15v14h-2.5" fill="none" stroke="#484848" stroke-width="1.4"/><circle cx="7" cy="7" r="3.6" fill="#eee" stroke="#484848" stroke-width="1.1"/><rect x="6" y="6.7" width="6.3" height="5.6" rx="1.4" fill="#eee" fill-opacity="0.7" stroke="#484848" stroke-width="1.1"/></g>
<path d="M353 181.5l8.5 8.5M361.5 181.5l-8.5 8.5" stroke="#222" stroke-width="1.5" fill="none"/>
</svg>
<div class="a" style="left:0;top:0;width:1280px;height:720px;will-change:transform">
<span id="t0" class="t" style="left:610.00px;top:4.00px;font-size:12px;line-height:16px;color:#1e1e1e;font-weight:normal;letter-spacing:-0.151px;">Autodesk Revit 2023.1 - Project1 - Floor Plan: Level 1</span>
<span id="t1" class="t" style="left:982.50px;top:6.50px;font-size:12px;line-height:16px;color:#1e1e1e;font-weight:normal;letter-spacing:-0.300px;display:inline-block;transform-origin:0 50%;transform:scaleX(0.9689);">KaB90.com</span>
<span id="t2" class="t" style="left:15.00px;top:34.00px;font-size:12.5px;line-height:16px;color:#ffffff;font-weight:normal;letter-spacing:-0.300px;display:inline-block;transform-origin:0 50%;transform:scaleX(0.9496);">File</span>
<span id="t3" class="t" style="left:59.00px;top:34.00px;font-size:12.5px;line-height:16px;color:#1e1e1e;font-weight:normal;letter-spacing:-0.184px;">Architecture</span>
<span id="t4" class="t" style="left:143.50px;top:34.00px;font-size:12.5px;line-height:16px;color:#1e1e1e;font-weight:normal;letter-spacing:-0.300px;">Structure</span>
<span id="t5" class="t" style="left:211.50px;top:34.00px;font-size:12.5px;line-height:16px;color:#1e1e1e;font-weight:normal;letter-spacing:-0.300px;display:inline-block;transform-origin:0 50%;transform:scaleX(0.9630);">Steel</span>
<span id="t6" class="t" style="left:257.50px;top:34.00px;font-size:12.5px;line-height:16px;color:#1e1e1e;font-weight:normal;letter-spacing:-0.300px;display:inline-block;transform-origin:0 50%;transform:scaleX(0.9431);">Precast</span>
<span id="t7" class="t" style="left:315.00px;top:34.00px;font-size:12.5px;line-height:16px;color:#1e1e1e;font-weight:normal;letter-spacing:-0.300px;display:inline-block;transform-origin:0 50%;transform:scaleX(0.9272);">Systems</span>
<span id="t8" class="t" style="left:377.50px;top:34.00px;font-size:12.5px;line-height:16px;color:#1e1e1e;font-weight:normal;letter-spacing:-0.211px;">Insert</span>
<span id="t9" class="t" style="left:427.00px;top:34.00px;font-size:12.5px;line-height:16px;color:#1e1e1e;font-weight:normal;letter-spacing:-0.193px;">Annotate</span>
<span id="t10" class="t" style="left:495.50px;top:34.00px;font-size:12.5px;line-height:16px;color:#1e1e1e;font-weight:normal;letter-spacing:-0.300px;display:inline-block;transform-origin:0 50%;transform:scaleX(0.9673);">Analyze</span>
<span id="t11" class="t" style="left:556.50px;top:34.00px;font-size:12.5px;line-height:16px;color:#1e1e1e;font-weight:normal;letter-spacing:-0.300px;display:inline-block;transform-origin:0 50%;transform:scaleX(0.9915);">Massing &amp; Site</span>
<span id="t12" class="t" style="left:656.00px;top:34.00px;font-size:12.5px;line-height:16px;color:#1e1e1e;font-weight:normal;letter-spacing:-0.267px;">Collaborate</span>
<span id="t13" class="t" style="left:737.00px;top:34.00px;font-size:12.5px;line-height:16px;color:#1e1e1e;font-weight:normal;letter-spacing:-0.300px;display:inline-block;transform-origin:0 50%;transform:scaleX(0.9932);">View</span>
<span id="t14" class="t" style="left:782.50px;top:34.00px;font-size:12.5px;line-height:16px;color:#1e1e1e;font-weight:normal;letter-spacing:-0.300px;display:inline-block;transform-origin:0 50%;transform:scaleX(0.9795);">Manage</span>
<span id="t15" class="t" style="left:845.00px;top:34.00px;font-size:12.5px;line-height:16px;color:#1e1e1e;font-weight:normal;letter-spacing:-0.228px;">Add-Ins</span>
<span id="t16" class="t" style="left:906.50px;top:34.00px;font-size:12.5px;line-height:16px;color:#1e1e1e;font-weight:normal;letter-spacing:0.029px;">Modify</span>
<span id="t17" class="t" style="left:12.50px;top:92.80px;font-size:12.5px;line-height:16px;color:#1e1e1e;font-weight:normal;letter-spacing:-0.055px;">Modify</span>
<span id="t18" class="t" style="left:7.80px;top:128.70px;font-size:12.5px;line-height:16px;color:#1e1e1e;font-weight:normal;letter-spacing:-0.300px;display:inline-block;transform-origin:0 50%;transform:scaleX(0.9469);">Select</span>
<span id="t19" class="t" style="left:64.80px;top:92.80px;font-size:12.5px;line-height:16px;color:#1e1e1e;font-weight:normal;letter-spacing:-0.300px;display:inline-block;transform-origin:0 50%;transform:scaleX(0.9935);">Transmit a model</span>
<span id="t20" class="t" style="left:172.60px;top:69.30px;font-size:12.5px;line-height:16px;color:#1e1e1e;font-weight:normal;letter-spacing:-0.300px;display:inline-block;transform-origin:0 50%;transform:scaleX(0.9952);">Help</span>
<span id="t21" class="t" style="left:172.60px;top:92.80px;font-size:12.5px;line-height:16px;color:#1e1e1e;font-weight:normal;letter-spacing:-0.054px;">About</span>
<span id="t22" class="t" style="left:109.00px;top:128.70px;font-size:12.5px;line-height:16px;color:#1e1e1e;font-weight:normal;letter-spacing:-0.300px;display:inline-block;transform-origin:0 50%;transform:scaleX(0.9674);">eTransmit</span>
<span id="t23" class="t" style="left:227.80px;top:92.80px;font-size:12.5px;line-height:16px;color:#1e1e1e;font-weight:normal;letter-spacing:-0.300px;display:inline-block;transform-origin:0 50%;transform:scaleX(0.9478);">Convert RFA</span>
<span id="t24" class="t" style="left:236.00px;top:108.90px;font-size:12.5px;line-height:16px;color:#1e1e1e;font-weight:normal;letter-spacing:-0.113px;">to FormIt</span>
<span id="t25" class="t" style="left:215.60px;top:128.70px;font-size:12.5px;line-height:16px;color:#1e1e1e;font-weight:normal;letter-spacing:-0.300px;display:inline-block;transform-origin:0 50%;transform:scaleX(0.9970);">FormIt Converter</span>
<span id="t26" class="t" style="left:324.50px;top:92.80px;font-size:12.5px;line-height:16px;color:#1e1e1e;font-weight:normal;letter-spacing:-0.300px;display:inline-block;transform-origin:0 50%;transform:scaleX(0.9714);">Kitchens</span>
<span id="t27" class="t" style="left:330.50px;top:128.70px;font-size:12.5px;line-height:16px;color:#1e1e1e;font-weight:normal;letter-spacing:-0.300px;display:inline-block;transform-origin:0 50%;transform:scaleX(0.8881);">KaB90</span>
<span id="t28" class="t" style="left:5.25px;top:178.00px;font-size:12px;line-height:16px;color:#1e1e1e;font-weight:normal;letter-spacing:-0.152px;">Project Browser - Project1</span>
<span id="t29" class="t" style="left:81.40px;top:196.30px;font-size:12px;line-height:16px;color:#1a1a1a;font-weight:normal;letter-spacing:-0.300px;display:inline-block;transform-origin:0 50%;transform:scaleX(0.9835);">Level 2</span>
<span id="t30" class="t" style="left:45.00px;top:212.98px;font-size:12px;line-height:16px;color:#1a1a1a;font-weight:normal;letter-spacing:-0.300px;">3D Views</span>
<span id="t31" class="t" style="left:81.40px;top:229.66px;font-size:12px;line-height:16px;color:#1a1a1a;font-weight:normal;letter-spacing:-0.202px;">01 - Existing</span>
<span id="t32" class="t" style="left:81.40px;top:246.34px;font-size:12px;line-height:16px;color:#1a1a1a;font-weight:normal;letter-spacing:-0.103px;">02 - Demo</span>
<span id="t33" class="t" style="left:81.40px;top:263.02px;font-size:12px;line-height:16px;color:#1a1a1a;font-weight:normal;letter-spacing:-0.109px;">A10 - Substructure</span>
<span id="t34" class="t" style="left:81.40px;top:279.70px;font-size:12px;line-height:16px;color:#1a1a1a;font-weight:normal;letter-spacing:-0.131px;">B10 - Superstructure</span>
<span id="t35" class="t" style="left:81.40px;top:296.38px;font-size:12px;line-height:16px;color:#1a1a1a;font-weight:normal;letter-spacing:-0.207px;">B20 - Exterior Enclosure</span>
<span id="t36" class="t" style="left:81.40px;top:313.06px;font-size:12px;line-height:16px;color:#1a1a1a;font-weight:normal;letter-spacing:-0.005px;">C10 - Interior Construction</span>
<span id="t37" class="t" style="left:81.40px;top:329.74px;font-size:12px;line-height:16px;color:#1a1a1a;font-weight:normal;letter-spacing:-0.085px;">C20 - Interior Finish</span>
<span id="t38" class="t" style="left:81.40px;top:346.42px;font-size:12px;line-height:16px;color:#1a1a1a;font-weight:normal;letter-spacing:-0.262px;">E20 - Furnishings</span>
<span id="t39" class="t" style="left:81.40px;top:363.10px;font-size:12px;line-height:16px;color:#1a1a1a;font-weight:normal;letter-spacing:-0.270px;">Perspective 3D</span>
<span id="t40" class="t" style="left:81.40px;top:379.78px;font-size:12px;line-height:16px;color:#1a1a1a;font-weight:normal;letter-spacing:-0.300px;display:inline-block;transform-origin:0 50%;transform:scaleX(0.9748);">{3D}</span>
<span id="t41" class="t" style="left:45.00px;top:396.46px;font-size:12px;line-height:16px;color:#1a1a1a;font-weight:normal;letter-spacing:-0.148px;">Elevations (Building Elevation)</span>
<span id="t42" class="t" style="left:81.40px;top:413.14px;font-size:12px;line-height:16px;color:#1a1a1a;font-weight:normal;letter-spacing:-0.300px;display:inline-block;transform-origin:0 50%;transform:scaleX(0.9029);">East</span>
<span id="t43" class="t" style="left:81.40px;top:429.82px;font-size:12px;line-height:16px;color:#1a1a1a;font-weight:normal;letter-spacing:0.251px;">North</span>
<span id="t44" class="t" style="left:81.00px;top:446.50px;font-size:12px;line-height:16px;color:#1a1a1a;font-weight:normal;letter-spacing:-0.152px;">South</span>
<span id="t45" class="t" style="left:81.40px;top:463.18px;font-size:12px;line-height:16px;color:#1a1a1a;font-weight:normal;letter-spacing:-0.256px;">West</span>
<span id="t46" class="t" style="left:41.20px;top:479.86px;font-size:12px;line-height:16px;color:#1a1a1a;font-weight:normal;letter-spacing:-0.300px;display:inline-block;transform-origin:0 50%;transform:scaleX(0.9921);">Legends</span>
<span id="t47" class="t" style="left:41.20px;top:496.54px;font-size:12px;line-height:16px;color:#1a1a1a;font-weight:normal;letter-spacing:-0.128px;">Schedules/Quantities (all)</span>
<span id="t48" class="t" style="left:41.20px;top:513.22px;font-size:12px;line-height:16px;color:#1a1a1a;font-weight:normal;letter-spacing:-0.300px;display:inline-block;transform-origin:0 50%;transform:scaleX(0.9947);">Sheets (all)</span>
<span id="t49" class="t" style="left:45.00px;top:529.90px;font-size:12px;line-height:16px;color:#1a1a1a;font-weight:normal;letter-spacing:-0.174px;">000 - Temporary Schedule Sheet</span>
<span id="t50" class="t" style="left:45.00px;top:546.58px;font-size:12px;line-height:16px;color:#1a1a1a;font-weight:normal;letter-spacing:-0.095px;">101 - Substructure</span>
<span id="t51" class="t" style="left:45.00px;top:563.26px;font-size:12px;line-height:16px;color:#1a1a1a;font-weight:normal;letter-spacing:-0.095px;">102 - Superstructure</span>
<span id="t52" class="t" style="left:41.20px;top:579.94px;font-size:12px;line-height:16px;color:#1a1a1a;font-weight:normal;letter-spacing:-0.300px;display:inline-block;transform-origin:0 50%;transform:scaleX(0.9841);">Families</span>
<span id="t53" class="t" style="left:41.20px;top:596.62px;font-size:12px;line-height:16px;color:#1a1a1a;font-weight:normal;letter-spacing:-0.260px;">Groups</span>
<span id="t54" class="t" style="left:45.00px;top:613.30px;font-size:12px;line-height:16px;color:#1a1a1a;font-weight:normal;letter-spacing:-0.031px;">Detail</span>
<span id="t55" class="t" style="left:45.00px;top:629.98px;font-size:12px;line-height:16px;color:#1a1a1a;font-weight:normal;letter-spacing:0.182px;">Model</span>
<span id="t56" class="t" style="left:81.70px;top:646.66px;font-size:12px;line-height:16px;color:#ffffff;font-weight:normal;letter-spacing:-0.150px;">KaB90 - Kitchen - 0&amp;1BD - Peninsula - Type A</span>
<span id="t57" class="t" style="left:41.20px;top:663.34px;font-size:12px;line-height:16px;color:#1a1a1a;font-weight:normal;letter-spacing:-0.300px;display:inline-block;transform-origin:0 50%;transform:scaleX(0.9894);">Revit Links</span>
<span id="t58" class="t" style="left:2.00px;top:699.60px;font-size:12px;line-height:16px;color:#1e1e1e;font-weight:normal;letter-spacing:-0.300px;display:inline-block;transform-origin:0 50%;transform:scaleX(0.9582);">Ready</span>
<span id="t59" class="t" style="left:397.50px;top:177.70px;font-size:12px;line-height:16px;color:#1a1a1a;font-weight:bold;letter-spacing:-0.300px;display:inline-block;transform-origin:0 50%;transform:scaleX(0.9714);">Level 1</span>
<span id="t60" class="t" style="left:525.00px;top:177.70px;font-size:12px;line-height:16px;color:#555;font-weight:normal;letter-spacing:-0.300px;display:inline-block;transform-origin:0 50%;transform:scaleX(0.9793);">{3D}</span>
<span id="t61" class="t" style="left:382.70px;top:677.00px;font-size:11px;line-height:14px;color:#111;font-weight:bold;letter-spacing:-0.107px;">1/2" = 1'-0"</span>
<span id="t62" class="t" style="left:654.80px;top:701.50px;font-size:12px;line-height:16px;color:#1e1e1e;font-weight:normal;letter-spacing:-0.300px;display:inline-block;transform-origin:0 50%;transform:scaleX(0.8390);">:0</span>
<span id="t63" class="t" style="left:708.00px;top:697.50px;font-size:12px;line-height:16px;color:#8a8a8a;font-weight:normal;letter-spacing:-0.003px;">Main Model</span>
<span id="t64" class="t" style="left:1260.60px;top:699.50px;font-size:12px;line-height:16px;color:#1e1e1e;font-weight:normal;letter-spacing:-0.300px;display:inline-block;transform-origin:0 50%;transform:scaleX(0.8709);">:0</span>
</div>
</body></html>
